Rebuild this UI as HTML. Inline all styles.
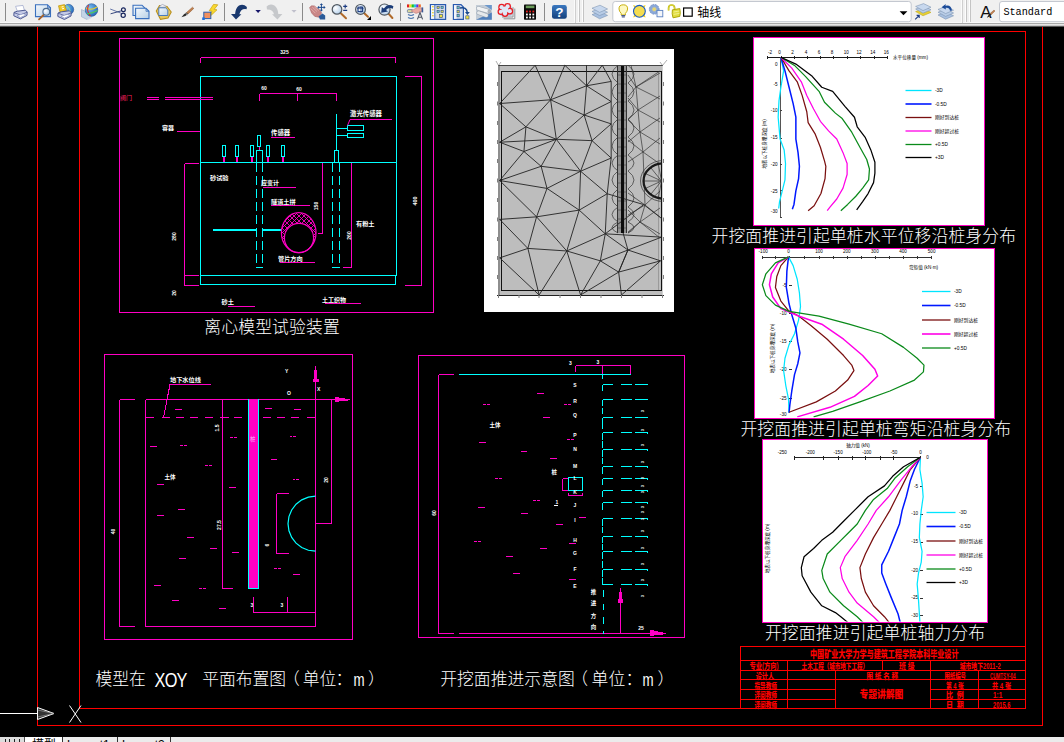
<!DOCTYPE html>
<html lang="zh-CN">
<head>
<meta charset="utf-8">
<title>专题讲解图</title>
<style>
html,body{margin:0;padding:0;background:#000;}
body{width:1064px;height:742px;overflow:hidden;position:relative;font-family:"Liberation Sans","Noto Sans CJK SC",sans-serif;}
#tb{position:absolute;left:0;top:0;width:1064px;height:27px;background:linear-gradient(#f0f0f0 0,#f0f0f0 22px,#f9f9f9 22px,#f9f9f9 23px,#a9a9a9 23px,#a9a9a9 24px,#e9e9e9 24px,#e4e4e4 25px,#c8c8c8 25px,#c8c8c8 26px,#585858 26px,#585858 27px);}
#tbi{position:absolute;left:0;top:0;}
#cv{position:absolute;left:0;top:0;}
#cv text{font-family:"Liberation Sans","Noto Sans CJK SC",sans-serif;}
.cap{position:absolute;color:#fff;font-size:16.8px;line-height:17px;white-space:nowrap;font-weight:300;font-family:"Liberation Sans","Noto Sans CJK SC",sans-serif;}
.ltn{font-size:20.4px;line-height:21px;width:0;display:flex;justify-content:center;transform:scaleX(.8);}
.ltm{font-size:17.5px;line-height:19px;width:0;display:flex;justify-content:center;transform:scaleX(.76);}
.lat{font-family:"Liberation Mono",monospace;font-size:17px;letter-spacing:1.4px;font-weight:400;}
#sb{position:absolute;left:0;top:737px;width:1064px;height:5px;background:#ebebeb;overflow:hidden;}
#sb i{position:absolute;top:0;height:5px;display:block}
#sb span{position:absolute;top:2px;font-size:12px;line-height:12px;color:#000;font-family:"Liberation Sans","Noto Sans CJK SC",sans-serif;}
.lay{position:absolute;left:697.3px;top:5px;font-size:12px;line-height:16px;color:#000;font-family:"Liberation Sans","Noto Sans CJK SC",sans-serif;}
.std{position:absolute;left:1003.4px;top:5px;font-size:10.2px;line-height:16px;color:#000;font-family:"Liberation Mono",monospace;letter-spacing:0px;}
</style>
</head>
<body>
<svg id="cv" width="1064" height="742" viewBox="0 0 1064 742">
<rect x="0" y="0" width="1064" height="742" fill="#000"/>
<g shape-rendering="crispEdges">
<line x1="37.5" y1="26" x2="37.5" y2="725.5" stroke="#ff0000" stroke-width="1" />
<line x1="37.5" y1="725.5" x2="1043" y2="725.5" stroke="#ff0000" stroke-width="1" />
<line x1="1042.5" y1="26" x2="1042.5" y2="725.5" stroke="#ff0000" stroke-width="1" />
<rect x="79.5" y="31.5" width="946" height="677" stroke="#ff0000" fill="none" stroke-width="1" />
<line x1="0" y1="713.5" x2="38" y2="713.5" stroke="#ffffff" stroke-width="1" />
</g>
<path d="M37.5 707.5 L54 713.5 L37.5 719.5 Z" fill="#333" stroke="#fff" stroke-width="1"/>
<path d="M37.5 710 L54 713.5 M37.5 717 L54 713.5" stroke="#aaa" stroke-width="0.6"/>
<path d="M69.5 705.5 L81 722.5 M81 705.5 L69.5 722.5" stroke="#fff" stroke-width="1"/>
<g shape-rendering="crispEdges">
<rect x="119.5" y="38.5" width="314" height="274" stroke="#ff00c4" fill="none" stroke-width="1" />
<line x1="200.5" y1="57.5" x2="395.5" y2="57.5" stroke="#ff00c4" stroke-width="1" />
<line x1="200.5" y1="57.5" x2="200.5" y2="63" stroke="#ff00c4" stroke-width="1" />
<line x1="395.5" y1="57.5" x2="395.5" y2="63" stroke="#ff00c4" stroke-width="1" />
<rect x="200.5" y="76.5" width="196" height="199" stroke="#00ffff" fill="none" stroke-width="1" />
<path d="M200.5 275.5 L200.5 284.5 L395.5 284.5 L395.5 275.5" stroke="#00ffff" fill="none" stroke-width="1" />
<line x1="200.5" y1="162.5" x2="396.5" y2="162.5" stroke="#00ffff" stroke-width="1" />
<line x1="405" y1="76.5" x2="421.5" y2="76.5" stroke="#ff00c4" stroke-width="1" />
<line x1="421.5" y1="76.5" x2="421.5" y2="285.5" stroke="#ff00c4" stroke-width="1" />
<line x1="405" y1="285.5" x2="421.5" y2="285.5" stroke="#ff00c4" stroke-width="1" />
<line x1="184.5" y1="163.5" x2="184.5" y2="285.5" stroke="#ff00c4" stroke-width="1" />
<line x1="184.5" y1="163.5" x2="198.5" y2="163.5" stroke="#ff00c4" stroke-width="1" />
<line x1="184.5" y1="275.5" x2="198.5" y2="275.5" stroke="#ff00c4" stroke-width="1" />
<line x1="184.5" y1="285.5" x2="198.5" y2="285.5" stroke="#ff00c4" stroke-width="1" />
<line x1="147" y1="97.5" x2="158.5" y2="97.5" stroke="#ff00c4" stroke-width="1" />
<line x1="165" y1="97.5" x2="212.5" y2="97.5" stroke="#ff00c4" stroke-width="1" />
<line x1="147" y1="99.5" x2="158.5" y2="99.5" stroke="#ff00c4" stroke-width="1" />
<line x1="165" y1="99.5" x2="212.5" y2="99.5" stroke="#ff00c4" stroke-width="1" />
<line x1="177" y1="131.5" x2="200" y2="131.5" stroke="#ff00c4" stroke-width="1" />
<line x1="259.5" y1="93.5" x2="336.5" y2="93.5" stroke="#ff00c4" stroke-width="1" />
<line x1="259.5" y1="93.5" x2="259.5" y2="101" stroke="#ff00c4" stroke-width="1" />
<line x1="297.5" y1="93.5" x2="297.5" y2="101" stroke="#ff00c4" stroke-width="1" />
<line x1="336.5" y1="93.5" x2="336.5" y2="101" stroke="#ff00c4" stroke-width="1" />
<line x1="336.5" y1="114" x2="336.5" y2="150.5" stroke="#00ffff" stroke-width="1" />
<line x1="336.5" y1="128.5" x2="347.5" y2="128.5" stroke="#00ffff" stroke-width="1" />
<line x1="336.5" y1="135.5" x2="347.5" y2="135.5" stroke="#00ffff" stroke-width="1" />
<rect x="347.5" y="125.5" width="16" height="5" stroke="#00ffff" fill="none" stroke-width="1" />
<rect x="347.5" y="133.5" width="16" height="4" stroke="#00ffff" fill="none" stroke-width="1" />
<line x1="350" y1="119.5" x2="391.5" y2="119.5" stroke="#ff00c4" stroke-width="1" />
<line x1="271" y1="137.5" x2="295" y2="137.5" stroke="#ff00c4" stroke-width="1" />
<rect x="222.5" y="145.5" width="3" height="11" stroke="#00ffff" fill="none" stroke-width="1" />
<rect x="223" y="157" width="2" height="5" stroke="#ff00c4" fill="#ff00c4" stroke-width="0" />
<rect x="235.5" y="145.5" width="3" height="11" stroke="#00ffff" fill="none" stroke-width="1" />
<rect x="236" y="157" width="2" height="5" stroke="#ff00c4" fill="#ff00c4" stroke-width="0" />
<rect x="250.5" y="145.5" width="3" height="11" stroke="#00ffff" fill="none" stroke-width="1" />
<rect x="251" y="157" width="2" height="5" stroke="#ff00c4" fill="#ff00c4" stroke-width="0" />
<rect x="266.5" y="145.5" width="3" height="11" stroke="#00ffff" fill="none" stroke-width="1" />
<rect x="267" y="157" width="2" height="5" stroke="#ff00c4" fill="#ff00c4" stroke-width="0" />
<rect x="281.5" y="145.5" width="3" height="11" stroke="#00ffff" fill="none" stroke-width="1" />
<rect x="282" y="157" width="2" height="5" stroke="#ff00c4" fill="#ff00c4" stroke-width="0" />
<rect x="257.5" y="135.5" width="3" height="11" stroke="#00ffff" fill="none" stroke-width="1" />
<rect x="258.5" y="147" width="1.5" height="3.5" stroke="#ff00c4" fill="#ff00c4" stroke-width="0" />
<rect x="256.5" y="150.5" width="6" height="12" stroke="#00ffff" fill="none" stroke-width="1" />
<rect x="334.5" y="150.5" width="4" height="12" stroke="#00ffff" fill="none" stroke-width="1" />
<line x1="256.5" y1="163" x2="256.5" y2="267.5" stroke="#00ffff" stroke-width="1" stroke-dasharray="9 4"/>
<line x1="262.5" y1="163" x2="262.5" y2="267.5" stroke="#00ffff" stroke-width="1" stroke-dasharray="9 4"/>
<line x1="332.5" y1="163" x2="332.5" y2="267.5" stroke="#00ffff" stroke-width="1" stroke-dasharray="9 4"/>
<line x1="339.5" y1="163" x2="339.5" y2="267.5" stroke="#00ffff" stroke-width="1" stroke-dasharray="9 4"/>
<line x1="256.5" y1="267.5" x2="262.5" y2="267.5" stroke="#00ffff" stroke-width="1" />
<line x1="332.5" y1="267.5" x2="339.5" y2="267.5" stroke="#00ffff" stroke-width="1" />
<line x1="322.5" y1="162.5" x2="322.5" y2="233.5" stroke="#ff00c4" stroke-width="1" />
<line x1="318" y1="233.5" x2="322.5" y2="233.5" stroke="#ff00c4" stroke-width="1" />
<line x1="351.5" y1="162.5" x2="351.5" y2="267.5" stroke="#ff00c4" stroke-width="1" />
<line x1="343" y1="267.5" x2="351.5" y2="267.5" stroke="#ff00c4" stroke-width="1" />
<rect x="213" y="229" width="43" height="2" stroke="#00ffff" fill="#00ffff" stroke-width="0" />
<rect x="263" y="229" width="18.5" height="2" stroke="#00ffff" fill="#00ffff" stroke-width="0" />
<line x1="263" y1="187.5" x2="295.5" y2="187.5" stroke="#ff00c4" stroke-width="1" />
<line x1="271" y1="205.5" x2="309.5" y2="205.5" stroke="#ff00c4" stroke-width="1" />
<line x1="280" y1="262.5" x2="315" y2="262.5" stroke="#ff00c4" stroke-width="1" />
<line x1="228" y1="306.5" x2="254.5" y2="306.5" stroke="#ff00c4" stroke-width="1" />
<line x1="324.5" y1="303.5" x2="360.5" y2="303.5" stroke="#ff00c4" stroke-width="1" />
</g>
<line x1="350" y1="119.5" x2="347.5" y2="125.5" stroke="#ff00c4" stroke-width="1" />
<defs><clipPath id="tc"><path clip-rule="evenodd" d="M281.4 232.7 a17.3 20 0 1 0 34.6 0 a17.3 20 0 1 0 -34.6 0 Z M284.4 238 a14.6 14.6 0 1 0 29.2 0 a14.6 14.6 0 1 0 -29.2 0 Z"/></clipPath></defs>
<path d="M154 210 l45 45 M214 210 l-45 45 M158.8 210 l45 45 M218.8 210 l-45 45 M163.6 210 l45 45 M223.6 210 l-45 45 M168.4 210 l45 45 M228.4 210 l-45 45 M173.2 210 l45 45 M233.2 210 l-45 45 M178 210 l45 45 M238 210 l-45 45 M182.8 210 l45 45 M242.8 210 l-45 45 M187.6 210 l45 45 M247.6 210 l-45 45 M192.4 210 l45 45 M252.4 210 l-45 45 M197.2 210 l45 45 M257.2 210 l-45 45 M202 210 l45 45 M262 210 l-45 45 M206.8 210 l45 45 M266.8 210 l-45 45 M211.6 210 l45 45 M271.6 210 l-45 45 M216.4 210 l45 45 M276.4 210 l-45 45 M221.2 210 l45 45 M281.2 210 l-45 45 M226 210 l45 45 M286 210 l-45 45 M230.8 210 l45 45 M290.8 210 l-45 45 M235.6 210 l45 45 M295.6 210 l-45 45 M240.4 210 l45 45 M300.4 210 l-45 45 M245.2 210 l45 45 M305.2 210 l-45 45 M250 210 l45 45 M310 210 l-45 45 M254.8 210 l45 45 M314.8 210 l-45 45 M259.6 210 l45 45 M319.6 210 l-45 45 M264.4 210 l45 45 M324.4 210 l-45 45 M269.2 210 l45 45 M329.2 210 l-45 45 M274 210 l45 45 M334 210 l-45 45 M278.8 210 l45 45 M338.8 210 l-45 45 M283.6 210 l45 45 M343.6 210 l-45 45 M288.4 210 l45 45 M348.4 210 l-45 45 M293.2 210 l45 45 M353.2 210 l-45 45 M298 210 l45 45 M358 210 l-45 45 M302.8 210 l45 45 M362.8 210 l-45 45 M307.6 210 l45 45 M367.6 210 l-45 45 M312.4 210 l45 45 M372.4 210 l-45 45 M317.2 210 l45 45 M377.2 210 l-45 45 M322 210 l45 45 M382 210 l-45 45 M326.8 210 l45 45 M386.8 210 l-45 45 M331.6 210 l45 45 M391.6 210 l-45 45 M336.4 210 l45 45 M396.4 210 l-45 45 M341.2 210 l45 45 M401.2 210 l-45 45 M346 210 l45 45 M406 210 l-45 45 M350.8 210 l45 45 M410.8 210 l-45 45 M355.6 210 l45 45 M415.6 210 l-45 45 M360.4 210 l45 45 M420.4 210 l-45 45 M365.2 210 l45 45 M425.2 210 l-45 45 M370 210 l45 45 M430 210 l-45 45 M374.8 210 l45 45 M434.8 210 l-45 45 M379.6 210 l45 45 M439.6 210 l-45 45 M384.4 210 l45 45 M444.4 210 l-45 45 M389.2 210 l45 45 M449.2 210 l-45 45" stroke="#ff00c4" stroke-width="0.9" fill="none" clip-path="url(#tc)" shape-rendering="crispEdges"/>
<ellipse cx="298.7" cy="232.7" rx="17.3" ry="20" stroke="#ff00c4" fill="none" stroke-width="1.2"/>
<circle cx="299" cy="238" r="14.6" stroke="#ff00c4" fill="none" stroke-width="1.2"/>
<text x="284.5" y="53.6" font-size="5" fill="#ffffff" text-anchor="middle" font-weight="700" >325</text>
<text x="264" y="89.7" font-size="5" fill="#ffffff" text-anchor="middle" font-weight="700" >60</text>
<text x="299" y="90.7" font-size="5" fill="#ffffff" text-anchor="middle" font-weight="700" >60</text>
<text x="120" y="100" font-size="6" fill="#ff2060" text-anchor="start" >阀门</text>
<text x="162" y="129.8" font-size="6" fill="#ffffff" text-anchor="start" font-weight="700" >容器</text>
<text x="350" y="116" font-size="6.4" fill="#ffffff" text-anchor="start" font-weight="700" >激光传感器</text>
<text x="271" y="135" font-size="6.4" fill="#ffffff" text-anchor="start" font-weight="700" >传感器</text>
<text x="210" y="179.5" font-size="6.2" fill="#ffffff" text-anchor="start" font-weight="700" >砂试验</text>
<text x="261" y="185" font-size="6" fill="#ffffff" text-anchor="start" font-weight="700" >应变计</text>
<text x="271" y="203.5" font-size="6.2" fill="#ffffff" text-anchor="start" font-weight="700" >隧道土拼</text>
<text x="318" y="206" font-size="5" fill="#ffffff" text-anchor="middle" transform="rotate(-90 318 206)" font-weight="700" >150</text>
<text x="416.5" y="201" font-size="5.5" fill="#ffffff" text-anchor="middle" transform="rotate(-90 416.5 201)" font-weight="700" >400</text>
<text x="176" y="236.5" font-size="5" fill="#ffffff" text-anchor="middle" transform="rotate(-90 176 236.5)" font-weight="700" >280</text>
<text x="176" y="293" font-size="5" fill="#ffffff" text-anchor="middle" transform="rotate(-90 176 293)" font-weight="700" >20</text>
<text x="351" y="235.5" font-size="5" fill="#ffffff" text-anchor="middle" transform="rotate(-90 351 235.5)" font-weight="700" >260</text>
<text x="356" y="226" font-size="6.2" fill="#ffffff" text-anchor="start" font-weight="700" >有粉土</text>
<text x="278" y="261" font-size="6.2" fill="#ffffff" text-anchor="start" font-weight="700" >管片方向</text>
<text x="221.5" y="303.5" font-size="6.2" fill="#ffffff" text-anchor="start" font-weight="700" >砂土</text>
<text x="322" y="301.5" font-size="6" fill="#ffffff" text-anchor="start" font-weight="700" >土工织物</text>
<rect x="484" y="49" width="190" height="263" fill="#fff"/>
<rect x="498" y="65" width="164.7" height="230.5" fill="#bdbdbd"/>
<rect x="618" y="65" width="9" height="168" fill="#909090"/>
<g shape-rendering="crispEdges">
<rect x="498" y="65" width="2" height="230" stroke="#8e8e8e" fill="#8e8e8e" stroke-width="0" />
<line x1="498" y1="65.5" x2="663" y2="65.5" stroke="#444" stroke-width="1" />
<line x1="658.5" y1="71.5" x2="658.5" y2="290.5" stroke="#9a9a9a" stroke-width="1" />
<rect x="496.5" y="294.5" width="167.5" height="1.5" stroke="#222" fill="#222" stroke-width="0" />
<rect x="501.5" y="71.5" width="160" height="219" stroke="#111" fill="none" stroke-width="1.2" />
</g>
<path d="M499.67 103.55 L535.19 65.26 M535.19 65.26 L550.59 99.8 M564.8 65.26 L550.59 99.8 M564.8 65.26 L586.51 85.79 M586.51 65.26 L586.51 85.79 M602.29 65.26 L586.51 85.79 M602.29 65.26 L611.18 81.44 M586.51 85.79 L611.18 81.44 M550.59 99.8 L586.51 85.79 M550.59 99.8 L499.67 103.55 M550.59 99.8 L525.92 126.84 M550.59 99.8 L584.14 115 M550.59 99.8 L556.31 139.27 M586.51 85.79 L584.14 115 M586.51 85.79 L611.18 101.57 M584.14 115 L611.18 101.57 M584.14 115 L611.18 123.88 M584.14 115 L556.31 139.27 M584.14 115 L592.03 140.65 M525.92 126.84 L499.67 103.55 M525.92 126.84 L499.67 142.23 M525.92 126.84 L556.31 139.27 M525.92 126.84 L523.94 151.51 M556.31 139.27 L499.67 142.23 M556.31 139.27 L592.03 140.65 M556.31 139.27 L523.94 151.51 M556.31 139.27 L580.59 171.24 M556.31 139.27 L541.11 166.31 M592.03 140.65 L611.18 123.88 M592.03 140.65 L611.18 158.02 M592.03 140.65 L580.59 171.24 M523.94 151.51 L499.67 142.23 M523.94 151.51 L499.67 180.52 M523.94 151.51 L541.11 166.31 M541.11 166.31 L580.59 171.24 M541.11 166.31 L499.67 180.52 M580.59 171.24 L611.18 158.02 M611.18 101.57 L611.18 81.44 M611.18 101.57 L611.18 123.88 M611.18 123.88 L611.18 158.02 M499.67 180.52 L547.03 188.42 M547.03 188.42 L580.59 171.24 M547.03 188.42 L541.11 166.31 M547.03 188.42 L579.2 210.13 M547.03 188.42 L536.57 216.84 M499.67 180.52 L536.57 216.84 M499.67 219.4 L536.57 216.84 M536.57 216.84 L579.2 210.13 M536.57 216.84 L527.89 248.42 M536.57 216.84 L566.77 250.98 M579.2 210.13 L566.77 250.98 M579.2 210.13 L607.23 193.75 M579.2 210.13 L605.25 233.81 M579.2 210.13 L580.59 171.24 M607.23 193.75 L580.59 171.24 M607.23 193.75 L605.25 233.81 M607.23 193.75 L611.18 158.02 M605.25 233.81 L566.77 250.98 M605.25 233.81 L600.32 260.85 M605.25 233.81 L627.95 250 M527.89 248.42 L499.67 219.4 M527.89 248.42 L499.67 257.89 M527.89 248.42 L566.77 250.98 M527.89 248.42 L539.14 294.99 M566.77 250.98 L539.14 294.99 M566.77 250.98 L580.59 294.99 M566.77 250.98 L600.32 260.85 M600.32 260.85 L580.59 294.99 M600.32 260.85 L618.67 272.1 M600.32 260.85 L627.95 250 M627.95 250 L618.67 272.1 M627.95 250 L660.51 260.85 M618.67 272.1 L660.51 260.85 M618.67 272.1 L621.44 294.99 M660.51 260.85 L621.44 294.99 M499.67 257.89 L539.14 294.99 M627.95 250 L661.5 237.17 M627.95 250 L623.02 232.63 M618.67 272.1 L627.95 250 M605.25 233.81 L661.5 237.17 M605.25 233.81 L643.74 204.6 M643.74 204.6 L661.5 218.42 M607.23 193.75 L643.74 204.6 M618.67 272.1 L580.59 294.99" stroke="#222" stroke-width="0.9" fill="none"/>
<path d="M618 65.3 Q606 74.15 618 83 M628 65.3 Q640 74.15 628 83 M618 83 Q606 92 618 101 M628 83 Q640 92 628 101 M618 101 Q606 110 618 119 M628 101 Q640 110 628 119 M618 119 Q606 128 618 137 M628 119 Q640 128 628 137 M618 137 Q606 146 618 155 M628 137 Q640 146 628 155 M618 155 Q606 163 618 171 M628 155 Q640 163 628 171 M618 171 Q606 180 618 189 M628 171 Q640 180 628 189 M618 189 Q606 198 618 207 M628 189 Q640 198 628 207 M618 207 Q606 214.5 618 222 M628 207 Q640 214.5 628 222 M618 222 Q606 227.5 618 233 M628 222 Q640 227.5 628 233 M628 75 L636 87 L660 73 M628 97 L636 87 L660 99 M628 98 L638 110 L660 96 M628 120 L638 110 L660 122 M636 87 L638 110 M628 120 L640 132 L660 118 M628 142 L640 132 L660 144 M638 110 L640 132 M628 140 L643 152 L660 138 M628 162 L643 152 L660 164 M640 132 L643 152 M628 193 L645 205 L660 191 M628 215 L645 205 L660 217 M643 152 L645 205 M628 210 L640 222 L660 208 M628 232 L640 222 L660 234 M645 205 L640 222 M631 65.3 L636 87 M660 71 L636 87 M628 233 L640 222 L660 238 M661.5 181 L658.32 198 M661.5 181 L650.64 194.48 M661.5 181 L645.37 188.44 M661.5 181 L643.5 181 M661.5 181 L645.37 173.56 M661.5 181 L650.64 167.52 M661.5 181 L658.32 164" stroke="#333" stroke-width="0.7" fill="none"/>
<path d="M617.5 75 L627 75 M617.5 84 L627 84 M617.5 93 L627 93 M617.5 102 L627 102 M617.5 111 L627 111 M617.5 120 L627 120 M617.5 129 L627 129 M617.5 138 L627 138 M617.5 147 L627 147 M617.5 156 L627 156 M617.5 165 L627 165 M617.5 174 L627 174 M617.5 183 L627 183 M617.5 192 L627 192 M617.5 201 L627 201 M617.5 210 L627 210 M617.5 219 L627 219 M617.5 228 L627 228" stroke="#444" stroke-width="0.6" fill="none"/>
<g shape-rendering="crispEdges">
<line x1="617.5" y1="65.5" x2="617.5" y2="233" stroke="#333" stroke-width="1" />
<line x1="626.5" y1="65.5" x2="626.5" y2="233" stroke="#333" stroke-width="1" />
<rect x="621" y="65.5" width="3.2" height="167" stroke="#0c0c0c" fill="#0c0c0c" stroke-width="0" />
</g>
<defs><clipPath id="mc"><rect x="498" y="65" width="163.5" height="230"/></clipPath></defs>
<g clip-path="url(#mc)"><ellipse cx="663.5" cy="181" rx="20" ry="17.6" stroke="#1a1a1a" stroke-width="2.2" fill="none"/><ellipse cx="663.5" cy="181" rx="23" ry="20.5" stroke="#333" stroke-width="0.7" fill="none"/></g>
<path d="M497.5 82 v4 M663.5 82 v4 M497.5 101.5 v4 M663.5 101.5 v4 M497.5 121 v4 M663.5 121 v4 M497.5 140 v4 M663.5 140 v4 M497.5 159 v4 M663.5 159 v4 M497.5 178.5 v4 M663.5 178.5 v4 M497.5 198 v4 M663.5 198 v4 M497.5 217.5 v4 M663.5 217.5 v4 M497.5 237 v4 M663.5 237 v4 M497.5 256 v4 M663.5 256 v4 M497.5 275 v4 M663.5 275 v4 M498.5 295 v3 M519 295 v3 M539 295 v3 M560 295 v3 M580.5 295 v3 M601 295 v3 M621.5 295 v3 M642 295 v3 M662.5 295 v3" stroke="#808080" stroke-width="1" fill="none"/>
<path d="M496 61 L498.5 65.5 L501 62 M660 62 L662.5 65.5 L667 60" stroke="#777" stroke-width="0.6" fill="none"/>
<rect x="753.5" y="37.5" width="231" height="187.5" fill="#fff" stroke="#ff00c4" stroke-width="1" shape-rendering="crispEdges"/>
<g shape-rendering="crispEdges">
<line x1="767.5" y1="57.5" x2="888" y2="57.5" stroke="#1a1a1a" stroke-width="1" />
<line x1="780.5" y1="57.5" x2="780.5" y2="218" stroke="#555" stroke-width="1" />
<line x1="767.5" y1="56" x2="767.5" y2="59" stroke="#222" stroke-width="1" />
<line x1="781.5" y1="56" x2="781.5" y2="59" stroke="#222" stroke-width="1" />
<line x1="794.5" y1="56" x2="794.5" y2="59" stroke="#222" stroke-width="1" />
<line x1="807.5" y1="56" x2="807.5" y2="59" stroke="#222" stroke-width="1" />
<line x1="820.5" y1="56" x2="820.5" y2="59" stroke="#222" stroke-width="1" />
<line x1="833.5" y1="56" x2="833.5" y2="59" stroke="#222" stroke-width="1" />
<line x1="847.5" y1="56" x2="847.5" y2="59" stroke="#222" stroke-width="1" />
<line x1="860.5" y1="56" x2="860.5" y2="59" stroke="#222" stroke-width="1" />
<line x1="874.5" y1="56" x2="874.5" y2="59" stroke="#222" stroke-width="1" />
<line x1="887.5" y1="56" x2="887.5" y2="59" stroke="#222" stroke-width="1" />
<line x1="779.5" y1="58.5" x2="782" y2="58.5" stroke="#444" stroke-width="1" />
<line x1="779.5" y1="84.5" x2="782" y2="84.5" stroke="#444" stroke-width="1" />
<line x1="779.5" y1="110.5" x2="782" y2="110.5" stroke="#444" stroke-width="1" />
<line x1="779.5" y1="138.5" x2="782" y2="138.5" stroke="#444" stroke-width="1" />
<line x1="779.5" y1="164.5" x2="782" y2="164.5" stroke="#444" stroke-width="1" />
<line x1="779.5" y1="190.5" x2="782" y2="190.5" stroke="#444" stroke-width="1" />
<line x1="779.5" y1="217.5" x2="782" y2="217.5" stroke="#444" stroke-width="1" />
</g>
<text x="769.98" y="53.5" font-size="4.6" fill="#000" text-anchor="middle" >-2</text>
<text x="779.52" y="53.5" font-size="4.6" fill="#000" text-anchor="middle" >0</text>
<text x="792.6" y="53.5" font-size="4.6" fill="#000" text-anchor="middle" >2</text>
<text x="805.96" y="53.5" font-size="4.6" fill="#000" text-anchor="middle" >4</text>
<text x="819.04" y="53.5" font-size="4.6" fill="#000" text-anchor="middle" >6</text>
<text x="832.12" y="53.5" font-size="4.6" fill="#000" text-anchor="middle" >8</text>
<text x="846.3" y="53.5" font-size="4.6" fill="#000" text-anchor="middle" >10</text>
<text x="859.11" y="53.5" font-size="4.6" fill="#000" text-anchor="middle" >12</text>
<text x="872.73" y="53.5" font-size="4.6" fill="#000" text-anchor="middle" >14</text>
<text x="886.36" y="53.5" font-size="4.6" fill="#000" text-anchor="middle" >16</text>
<text x="893" y="58.8" font-size="4.6" fill="#000" text-anchor="start" >水平位移量 (mm)</text>
<text x="777.5" y="66.31" font-size="4.6" fill="#000" text-anchor="end" >0</text>
<text x="777.5" y="85.67" font-size="4.6" fill="#000" text-anchor="end" >-5</text>
<text x="777.5" y="112.1" font-size="4.6" fill="#000" text-anchor="end" >-10</text>
<text x="777.5" y="139.36" font-size="4.6" fill="#000" text-anchor="end" >-15</text>
<text x="777.5" y="165.8" font-size="4.6" fill="#000" text-anchor="end" >-20</text>
<text x="777.5" y="192.51" font-size="4.6" fill="#000" text-anchor="end" >-25</text>
<text x="777.5" y="212.95" font-size="4.6" fill="#000" text-anchor="end" >-30</text>
<text x="766" y="144" font-size="4.6" fill="#000" text-anchor="middle" transform="rotate(-90 766 144)" >地表以下桩身埋深度 (m)</text>
<path d="M780.88 57.26 L783.61 70.88 L780.88 87.24 L778.98 100.86 L778.16 117.22 L780.07 139.02 L784.15 149.92 L785.52 163.55 L784.97 179.9 L782.25 190.81 L779.52 201.71 L778.7 208.52" stroke="#00e5ff" fill="none" stroke-width="1.25" stroke-linejoin="round"/>
<path d="M780.88 57.26 L784.97 70.88 L789.06 87.24 L793.15 103.59 L795.87 117.22 L795.87 139.02 L798.05 152.65 L799.42 166.28 L798.6 178.54 L795.87 190.81 L793.97 204.43 L792.33 209.34" stroke="#0018ff" fill="none" stroke-width="1.5" stroke-linejoin="round"/>
<path d="M780.88 57.26 L789.06 70.88 L797.24 81.79 L802.14 95.41 L806.78 111.77 L808.14 122.67 L814.95 133.57 L820.4 147.2 L824.49 160.83 L825.85 166.28 L825.04 178.54 L820.95 193.53 L814.13 205.8 L808.14 210.7" stroke="#7a1010" fill="none" stroke-width="1.25" stroke-linejoin="round"/>
<path d="M780.88 57.26 L791.79 68.16 L801.32 81.79 L806.78 95.41 L813.59 109.04 L820.4 121.31 L828.58 130.84 L836.76 139.02 L843.03 152.65 L847.11 163.55 L847.11 174.45 L843.03 188.08 L836.76 198.98 L829.94 207.16 L827.22 210.7" stroke="#ff00e6" fill="none" stroke-width="1.25" stroke-linejoin="round"/>
<path d="M780.88 57.26 L794.51 65.43 L805.41 76.33 L819.04 91.32 L824.49 102.23 L835.39 113.13 L842.21 118.58 L851.75 132.21 L859.92 147.2 L866.74 159.46 L869.46 169 L868.65 179.9 L862.65 188.08 L855.84 196.26 L847.66 204.43 L840.84 210.7" stroke="#0a8a1a" fill="none" stroke-width="1.25" stroke-linejoin="round"/>
<path d="M780.88 57.26 L795.87 64.07 L812.23 76.33 L821.77 87.24 L832.67 91.32 L844.93 106.32 L854.47 117.22 L857.2 126.76 L865.37 137.66 L870.83 149.92 L874.91 162.19 L874.91 173.09 L873.55 182.63 L868.1 193.53 L862.65 201.71 L856.65 209.89" stroke="#000000" fill="none" stroke-width="1.25" stroke-linejoin="round"/>
<line x1="905.5" y1="90.5" x2="931.5" y2="90.5" stroke="#00e5ff" stroke-width="1.3" />
<text x="935" y="92.3" font-size="4.8" fill="#000" text-anchor="start" >-3D</text>
<line x1="905.5" y1="104" x2="931.5" y2="104" stroke="#0018ff" stroke-width="1.6" />
<text x="935" y="105.8" font-size="4.8" fill="#000" text-anchor="start" >-0.5D</text>
<line x1="905.5" y1="117.5" x2="931.5" y2="117.5" stroke="#7a1010" stroke-width="1.3" />
<text x="935" y="119.3" font-size="4.8" fill="#000" text-anchor="start" >刚好到达桩</text>
<line x1="905.5" y1="131" x2="931.5" y2="131" stroke="#ff00e6" stroke-width="1.3" />
<text x="935" y="132.8" font-size="4.8" fill="#000" text-anchor="start" >刚好超过桩</text>
<line x1="905.5" y1="144.5" x2="931.5" y2="144.5" stroke="#0a8a1a" stroke-width="1.3" />
<text x="935" y="146.3" font-size="4.8" fill="#000" text-anchor="start" >+0.5D</text>
<line x1="905.5" y1="157.5" x2="931.5" y2="157.5" stroke="#000000" stroke-width="1.3" />
<text x="935" y="159.3" font-size="4.8" fill="#000" text-anchor="start" >+3D</text>
<rect x="754.5" y="248" width="240" height="170" fill="#fff" stroke="#ff00c4" stroke-width="1" shape-rendering="crispEdges"/>
<g shape-rendering="crispEdges">
<line x1="762" y1="257" x2="931" y2="257" stroke="#333" stroke-width="1" />
<line x1="762.5" y1="255.5" x2="762.5" y2="258.5" stroke="#333" stroke-width="1" />
<line x1="775.5" y1="255.5" x2="775.5" y2="258.5" stroke="#333" stroke-width="1" />
<line x1="789.5" y1="255.5" x2="789.5" y2="258.5" stroke="#333" stroke-width="1" />
<line x1="804.5" y1="255.5" x2="804.5" y2="258.5" stroke="#333" stroke-width="1" />
<line x1="819.5" y1="255.5" x2="819.5" y2="258.5" stroke="#333" stroke-width="1" />
<line x1="833.5" y1="255.5" x2="833.5" y2="258.5" stroke="#333" stroke-width="1" />
<line x1="847.5" y1="255.5" x2="847.5" y2="258.5" stroke="#333" stroke-width="1" />
<line x1="861.5" y1="255.5" x2="861.5" y2="258.5" stroke="#333" stroke-width="1" />
<line x1="875.5" y1="255.5" x2="875.5" y2="258.5" stroke="#333" stroke-width="1" />
<line x1="889.5" y1="255.5" x2="889.5" y2="258.5" stroke="#333" stroke-width="1" />
<line x1="903.5" y1="255.5" x2="903.5" y2="258.5" stroke="#333" stroke-width="1" />
<line x1="917.5" y1="255.5" x2="917.5" y2="258.5" stroke="#333" stroke-width="1" />
<line x1="931.5" y1="255.5" x2="931.5" y2="258.5" stroke="#333" stroke-width="1" />
<line x1="789" y1="285.5" x2="791.5" y2="285.5" stroke="#333" stroke-width="1" />
<line x1="789" y1="313.5" x2="791.5" y2="313.5" stroke="#333" stroke-width="1" />
<line x1="789" y1="341.5" x2="791.5" y2="341.5" stroke="#333" stroke-width="1" />
<line x1="789" y1="369.5" x2="791.5" y2="369.5" stroke="#333" stroke-width="1" />
<line x1="789" y1="398.5" x2="791.5" y2="398.5" stroke="#333" stroke-width="1" />
</g>
<text x="763.17" y="253" font-size="4.6" fill="#000" text-anchor="middle" >-100</text>
<text x="788.51" y="253" font-size="4.6" fill="#000" text-anchor="middle" >0</text>
<text x="819.04" y="253" font-size="4.6" fill="#000" text-anchor="middle" >100</text>
<text x="846.84" y="253" font-size="4.6" fill="#000" text-anchor="middle" >200</text>
<text x="874.91" y="253" font-size="4.6" fill="#000" text-anchor="middle" >300</text>
<text x="902.99" y="253" font-size="4.6" fill="#000" text-anchor="middle" >400</text>
<text x="931.61" y="253" font-size="4.6" fill="#000" text-anchor="middle" >500</text>
<text x="909" y="268.8" font-size="4.6" fill="#000" text-anchor="start" >弯矩值 (kN·m)</text>
<text x="786.5" y="286.93" font-size="4.6" fill="#000" text-anchor="end" >-5</text>
<text x="786.5" y="315.01" font-size="4.6" fill="#000" text-anchor="end" >-10</text>
<text x="786.5" y="343.08" font-size="4.6" fill="#000" text-anchor="end" >-15</text>
<text x="786.5" y="370.88" font-size="4.6" fill="#000" text-anchor="end" >-20</text>
<text x="786.5" y="399.5" font-size="4.6" fill="#000" text-anchor="end" >-25</text>
<text x="786.5" y="415.85" font-size="4.6" fill="#000" text-anchor="end" >-30</text>
<text x="773.5" y="348.5" font-size="4.6" fill="#000" text-anchor="middle" transform="rotate(-90 773.5 348.5)" >地表以下桩身埋深度 (m)</text>
<defs><clipPath id="k2"><rect x="755" y="248.5" width="239" height="169"/></clipPath></defs><g clip-path="url(#k2)">
<path d="M788.51 256.89 L793.15 265.61 L797.24 279.24 L799.42 292.86 L800.51 306.49 L798.6 320.12 L794.51 333.75 L789.06 344.65 L784.97 358.28 L783.61 370.54 L785.79 385.53 L788.51 399.16 L789.06 412.79" stroke="#00e5ff" fill="none" stroke-width="1.25" stroke-linejoin="round"/>
<path d="M788.51 256.89 L786.88 271.06 L786.33 287.41 L789.06 303.77 L791.79 314.67 L795.87 328.3 L797.78 341.92 L799.96 352.83 L797.78 363.73 L794.51 374.63 L791.79 390.98 L789.88 404.61 L789.06 412.79" stroke="#0018ff" fill="none" stroke-width="1.5" stroke-linejoin="round"/>
<path d="M788.51 256.89 L780.88 265.61 L776.79 276.51 L775.43 287.41 L780.88 301.04 L788.51 310.58 L798.6 316.03 L810.86 325.57 L827.22 339.2 L843.57 355.55 L851.75 365.09 L853.93 370.54 L847.66 380.08 L835.39 390.98 L816.32 401.89 L789.06 412.24" stroke="#7a1010" fill="none" stroke-width="1.25" stroke-linejoin="round"/>
<path d="M788.51 256.89 L778.16 262.88 L771.34 273.79 L769.44 284.69 L772.71 296.95 L780.88 308.67 L798.6 316.03 L821.77 324.21 L843.57 339.2 L862.65 355.55 L874.91 369.18 L877.64 375.99 L868.1 385.53 L854.47 396.43 L829.94 407.34 L797.24 416.88" stroke="#ff00e6" fill="none" stroke-width="1.5" stroke-linejoin="round"/>
<path d="M788.51 256.89 L775.43 262.88 L765.89 273.79 L762.35 284.69 L765.89 295.59 L775.43 305.13 L789.06 311.4 L819.04 316.03 L849.02 324.21 L881.73 333.75 L903.53 347.37 L917.16 358.28 L923.97 365.09 L923.43 371.9 L914.43 380.08 L889.9 390.98 L859.92 401.89 L832.67 411.42 L813.59 416.88" stroke="#0a8a1a" fill="none" stroke-width="1.25" stroke-linejoin="round"/>
</g>
<line x1="922" y1="291.5" x2="950.5" y2="291.5" stroke="#00e5ff" stroke-width="1.3" />
<text x="954" y="293.3" font-size="4.8" fill="#000" text-anchor="start" >-3D</text>
<line x1="922" y1="305.5" x2="950.5" y2="305.5" stroke="#0018ff" stroke-width="1.6" />
<text x="954" y="307.3" font-size="4.8" fill="#000" text-anchor="start" >-0.5D</text>
<line x1="922" y1="320" x2="950.5" y2="320" stroke="#7a1010" stroke-width="1.3" />
<text x="954" y="321.8" font-size="4.8" fill="#000" text-anchor="start" >刚好到达桩</text>
<line x1="922" y1="334" x2="950.5" y2="334" stroke="#ff00e6" stroke-width="1.6" />
<text x="954" y="335.8" font-size="4.8" fill="#000" text-anchor="start" >刚好超过桩</text>
<line x1="922" y1="348" x2="950.5" y2="348" stroke="#0a8a1a" stroke-width="1.3" />
<text x="954" y="349.8" font-size="4.8" fill="#000" text-anchor="start" >+0.5D</text>
<rect x="762.5" y="439.5" width="225" height="182.5" fill="#fff" stroke="#ff00c4" stroke-width="1" shape-rendering="crispEdges"/>
<g shape-rendering="crispEdges">
<line x1="794" y1="457.5" x2="921" y2="457.5" stroke="#222" stroke-width="1" />
<line x1="794.5" y1="456" x2="794.5" y2="460" stroke="#222" stroke-width="1" />
<line x1="823.5" y1="456" x2="823.5" y2="460" stroke="#222" stroke-width="1" />
<line x1="838.5" y1="456" x2="838.5" y2="460" stroke="#222" stroke-width="1" />
<line x1="852.5" y1="456" x2="852.5" y2="460" stroke="#222" stroke-width="1" />
<line x1="865.5" y1="456" x2="865.5" y2="460" stroke="#222" stroke-width="1" />
<line x1="880.5" y1="456" x2="880.5" y2="460" stroke="#222" stroke-width="1" />
<line x1="893.5" y1="456" x2="893.5" y2="460" stroke="#222" stroke-width="1" />
<line x1="920.5" y1="456" x2="920.5" y2="460" stroke="#222" stroke-width="1" />
<line x1="919.5" y1="486.5" x2="922.5" y2="486.5" stroke="#333" stroke-width="1" />
<line x1="919.5" y1="514.5" x2="922.5" y2="514.5" stroke="#333" stroke-width="1" />
<line x1="919.5" y1="542.5" x2="922.5" y2="542.5" stroke="#333" stroke-width="1" />
<line x1="919.5" y1="570.5" x2="922.5" y2="570.5" stroke="#333" stroke-width="1" />
<line x1="919.5" y1="598.5" x2="922.5" y2="598.5" stroke="#333" stroke-width="1" />
<line x1="919.5" y1="615.5" x2="922.5" y2="615.5" stroke="#333" stroke-width="1" />
</g>
<text x="782.25" y="453.5" font-size="4.6" fill="#000" text-anchor="middle" >-250</text>
<text x="810.32" y="453.5" font-size="4.6" fill="#000" text-anchor="middle" >-200</text>
<text x="838.12" y="453.5" font-size="4.6" fill="#000" text-anchor="middle" >-150</text>
<text x="866.74" y="453.5" font-size="4.6" fill="#000" text-anchor="middle" >-100</text>
<text x="893.99" y="453.5" font-size="4.6" fill="#000" text-anchor="middle" >-50</text>
<text x="920.43" y="453.5" font-size="4.6" fill="#000" text-anchor="middle" >0</text>
<text x="858" y="447.2" font-size="4.6" fill="#000" text-anchor="middle" >轴力值 (kN)</text>
<text x="927.5" y="459" font-size="4.6" fill="#000" text-anchor="middle" >0</text>
<text x="918" y="487.56" font-size="4.6" fill="#000" text-anchor="end" >-5</text>
<text x="918" y="515.36" font-size="4.6" fill="#000" text-anchor="end" >-10</text>
<text x="918" y="543.44" font-size="4.6" fill="#000" text-anchor="end" >-15</text>
<text x="918" y="571.51" font-size="4.6" fill="#000" text-anchor="end" >-20</text>
<text x="918" y="599.31" font-size="4.6" fill="#000" text-anchor="end" >-25</text>
<text x="918" y="617.03" font-size="4.6" fill="#000" text-anchor="end" >-30</text>
<text x="768.5" y="548.5" font-size="4.6" fill="#000" text-anchor="middle" transform="rotate(-90 768.5 548.5)" >地表以下桩身埋深度 (m)</text>
<defs><clipPath id="k3"><rect x="763" y="440" width="224" height="181.5"/></clipPath></defs><g clip-path="url(#k3)">
<path d="M920.43 457.25 L919.89 469.51 L922.07 483.14 L923.16 496.77 L921.25 510.39 L919.89 524.02 L919.34 537.65 L922.07 551.28 L921.25 562.18 L918.52 573.08 L917.16 583.98 L918.52 600.34 L919.89 622.14" stroke="#00e5ff" fill="none" stroke-width="1.25" stroke-linejoin="round"/>
<path d="M920.43 457.25 L914.43 469.51 L910.35 480.41 L906.26 496.77 L902.17 510.39 L899.44 524.02 L893.99 537.65 L888.54 551.28 L881.73 564.9 L881.73 573.08 L885.82 583.98 L891.27 597.61 L898.08 613.96 L900.81 624.87" stroke="#0018ff" fill="none" stroke-width="1.5" stroke-linejoin="round"/>
<path d="M920.43 457.25 L910.35 469.51 L903.53 483.14 L896.72 496.77 L889.9 510.39 L881.73 524.02 L873.55 537.65 L865.37 554 L859.92 567.63 L861.29 578.53 L865.37 592.16 L873.55 605.79 L884.45 616.69 L889.9 623.5" stroke="#7a1010" fill="none" stroke-width="1.25" stroke-linejoin="round"/>
<path d="M920.43 457.25 L911.71 466.79 L900.81 480.41 L888.54 496.77 L876.28 510.39 L868.1 524.02 L857.2 540.37 L844.93 556.73 L840.3 567.63 L842.21 578.53 L849.02 592.16 L857.2 603.06 L873.55 616.69 L881.73 624.87" stroke="#ff00e6" fill="none" stroke-width="1.25" stroke-linejoin="round"/>
<path d="M920.43 457.25 L907.62 466.79 L895.36 477.69 L887.18 488.59 L873.55 499.49 L865.37 510.39 L857.2 524.02 L849.02 532.2 L840.84 540.37 L827.22 554 L821.77 570.36 L823.13 578.53 L829.94 592.16 L843.57 605.79 L857.2 616.69 L865.37 624.87" stroke="#0a8a1a" fill="none" stroke-width="1.25" stroke-linejoin="round"/>
<path d="M920.43 457.25 L903.53 466.79 L892.63 476.32 L884.45 485.86 L868.1 496.77 L854.47 510.39 L843.57 521.3 L832.67 532.2 L821.77 540.37 L813.59 548.55 L804.05 556.73 L801.32 567.63 L802.14 575.81 L810.86 592.16 L821.77 605.79 L835.39 612.6 L840.84 616.69 L849.02 623.5" stroke="#000000" fill="none" stroke-width="1.25" stroke-linejoin="round"/>
</g>
<line x1="926.5" y1="512.5" x2="955.5" y2="512.5" stroke="#00e5ff" stroke-width="1.3" />
<text x="959" y="514.3" font-size="4.8" fill="#000" text-anchor="start" >-3D</text>
<line x1="926.5" y1="526.5" x2="955.5" y2="526.5" stroke="#0018ff" stroke-width="1.6" />
<text x="959" y="528.3" font-size="4.8" fill="#000" text-anchor="start" >-0.5D</text>
<line x1="926.5" y1="541" x2="955.5" y2="541" stroke="#7a1010" stroke-width="1.3" />
<text x="959" y="542.8" font-size="4.8" fill="#000" text-anchor="start" >刚好到达桩</text>
<line x1="926.5" y1="555" x2="955.5" y2="555" stroke="#ff00e6" stroke-width="1.3" />
<text x="959" y="556.8" font-size="4.8" fill="#000" text-anchor="start" >刚好超过桩</text>
<line x1="926.5" y1="569" x2="955.5" y2="569" stroke="#0a8a1a" stroke-width="1.3" />
<text x="959" y="570.8" font-size="4.8" fill="#000" text-anchor="start" >+0.5D</text>
<line x1="926.5" y1="582.5" x2="955.5" y2="582.5" stroke="#000000" stroke-width="1.3" />
<text x="959" y="584.3" font-size="4.8" fill="#000" text-anchor="start" >+3D</text>
<g shape-rendering="crispEdges">
<rect x="740.5" y="646.5" width="285" height="62" stroke="#ff0000" fill="none" stroke-width="1" />
<line x1="740.5" y1="660.5" x2="1025.5" y2="660.5" stroke="#ff0000" stroke-width="1" />
<line x1="740.5" y1="670.5" x2="1025.5" y2="670.5" stroke="#ff0000" stroke-width="1" />
<line x1="740.5" y1="679.5" x2="1025.5" y2="679.5" stroke="#ff0000" stroke-width="1" />
<line x1="740.5" y1="689.5" x2="835.5" y2="689.5" stroke="#ff0000" stroke-width="1" />
<line x1="930.5" y1="689.5" x2="1025.5" y2="689.5" stroke="#ff0000" stroke-width="1" />
<line x1="740.5" y1="699.5" x2="835.5" y2="699.5" stroke="#ff0000" stroke-width="1" />
<line x1="930.5" y1="699.5" x2="1025.5" y2="699.5" stroke="#ff0000" stroke-width="1" />
<line x1="787.5" y1="660.5" x2="787.5" y2="708.5" stroke="#ff0000" stroke-width="1" />
<line x1="882.5" y1="660.5" x2="882.5" y2="670.5" stroke="#ff0000" stroke-width="1" />
<line x1="930.5" y1="660.5" x2="930.5" y2="708.5" stroke="#ff0000" stroke-width="1" />
<line x1="835.5" y1="670.5" x2="835.5" y2="708.5" stroke="#ff0000" stroke-width="1" />
<line x1="978.5" y1="670.5" x2="978.5" y2="708.5" stroke="#ff0000" stroke-width="1" />
</g>
<text x="810" y="658.3" font-size="10.4" fill="#ff0000" font-weight="900" textLength="148.5" lengthAdjust="spacingAndGlyphs">中国矿业大学力学与建筑工程学院本科毕业设计</text>
<text x="749.5" y="669.3" font-size="8.2" fill="#ff0000" font-weight="900" textLength="29.1" lengthAdjust="spacingAndGlyphs">专业(方向)</text>
<text x="801.6" y="669.3" font-size="8.2" fill="#ff0000" font-weight="900" textLength="66.4" lengthAdjust="spacingAndGlyphs">土木工程（城市地下工程）</text>
<text x="898.9" y="669.3" font-size="8.2" fill="#ff0000" font-weight="900" textLength="15.7" lengthAdjust="spacingAndGlyphs">班 级</text>
<text x="959.8" y="669.3" font-size="8.2" fill="#ff0000" font-weight="900" textLength="40.8" lengthAdjust="spacingAndGlyphs">城市地下2011-2</text>
<text x="755.7" y="679.2" font-size="8.2" fill="#ff0000" font-weight="900" textLength="18.3" lengthAdjust="spacingAndGlyphs">设计人</text>
<text x="754.5" y="688.7" font-size="8.2" fill="#ff0000" font-weight="900" textLength="22.5" lengthAdjust="spacingAndGlyphs">指导教师</text>
<text x="754.5" y="698.2" font-size="8.2" fill="#ff0000" font-weight="900" textLength="22.5" lengthAdjust="spacingAndGlyphs">评阅教师</text>
<text x="754.5" y="707.5" font-size="8.2" fill="#ff0000" font-weight="900" textLength="22.5" lengthAdjust="spacingAndGlyphs">评阅教师</text>
<text x="866.5" y="679.2" font-size="8.2" fill="#ff0000" font-weight="900" textLength="31.5" lengthAdjust="spacingAndGlyphs">图 纸 名 称</text>
<text x="859.6" y="698.3" font-size="10.6" fill="#ff0000" font-weight="900" textLength="43.7" lengthAdjust="spacingAndGlyphs">专题讲解图</text>
<text x="944.4" y="679.2" font-size="8.2" fill="#ff0000" font-weight="900" textLength="21.6" lengthAdjust="spacingAndGlyphs">图纸编号</text>
<text x="946" y="688.7" font-size="8.2" fill="#ff0000" font-weight="900" textLength="17.8" lengthAdjust="spacingAndGlyphs">第 4 张</text>
<text x="946" y="698.2" font-size="8.2" fill="#ff0000" font-weight="900" textLength="17.8" lengthAdjust="spacingAndGlyphs">比&#160;&#160;例</text>
<text x="946" y="707.5" font-size="8.2" fill="#ff0000" font-weight="900" textLength="17.8" lengthAdjust="spacingAndGlyphs">日&#160;&#160;期</text>
<text x="989.9" y="679.2" font-size="8.2" fill="#ff0000" font-weight="900" textLength="25.7" lengthAdjust="spacingAndGlyphs">CUMTSY-04</text>
<text x="992" y="688.7" font-size="8.2" fill="#ff0000" font-weight="900" textLength="19" lengthAdjust="spacingAndGlyphs">共 4 张</text>
<text x="993" y="698.2" font-size="8.2" fill="#ff0000" font-weight="900" textLength="9.4" lengthAdjust="spacingAndGlyphs">1:1</text>
<text x="993" y="707.5" font-size="8.2" fill="#ff0000" font-weight="900" textLength="17.3" lengthAdjust="spacingAndGlyphs">2015.6</text>
<g shape-rendering="crispEdges">
<rect x="104.5" y="354.5" width="248" height="285" stroke="#ff00c4" fill="none" stroke-width="1" />
<line x1="119.5" y1="399.5" x2="119.5" y2="626.5" stroke="#ff00c4" stroke-width="1" />
<line x1="119.5" y1="399.5" x2="134.5" y2="399.5" stroke="#ff00c4" stroke-width="1" />
<line x1="119.5" y1="626.5" x2="134.5" y2="626.5" stroke="#ff00c4" stroke-width="1" />
<line x1="145.5" y1="399.5" x2="145.5" y2="626.5" stroke="#ff00c4" stroke-width="1" />
<line x1="145.5" y1="626.5" x2="315.5" y2="626.5" stroke="#ff00c4" stroke-width="1" />
<line x1="145.5" y1="399.5" x2="336" y2="399.5" stroke="#ff00c4" stroke-width="1" />
<line x1="315.5" y1="380" x2="315.5" y2="626.5" stroke="#ff00c4" stroke-width="1" />
<line x1="145.6" y1="417.5" x2="153.9" y2="417.5" stroke="#ff00c4" stroke-width="1" />
<line x1="162" y1="417.5" x2="170.1" y2="417.5" stroke="#ff00c4" stroke-width="1" />
<line x1="175.9" y1="417.5" x2="184" y2="417.5" stroke="#ff00c4" stroke-width="1" />
<line x1="190.4" y1="417.5" x2="198.4" y2="417.5" stroke="#ff00c4" stroke-width="1" />
<line x1="205.1" y1="417.5" x2="213.1" y2="417.5" stroke="#ff00c4" stroke-width="1" />
<line x1="219.5" y1="417.5" x2="228.8" y2="417.5" stroke="#ff00c4" stroke-width="1" />
<line x1="233.9" y1="417.5" x2="242" y2="417.5" stroke="#ff00c4" stroke-width="1" />
<line x1="263.2" y1="417.5" x2="270.8" y2="417.5" stroke="#ff00c4" stroke-width="1" />
<line x1="277" y1="417.5" x2="285" y2="417.5" stroke="#ff00c4" stroke-width="1" />
<line x1="291.1" y1="417.5" x2="299" y2="417.5" stroke="#ff00c4" stroke-width="1" />
<line x1="306.6" y1="417.5" x2="315.1" y2="417.5" stroke="#ff00c4" stroke-width="1" />
<line x1="222.5" y1="399.5" x2="222.5" y2="588.5" stroke="#ff00c4" stroke-width="1" />
<line x1="222.5" y1="588.5" x2="232.5" y2="588.5" stroke="#ff00c4" stroke-width="1" />
<rect x="248.5" y="399.5" width="10" height="189" stroke="#00ffff" fill="#ff00c4" stroke-width="1" />
<line x1="249" y1="399.5" x2="258" y2="399.5" stroke="#ff00c4" stroke-width="1" />
<line x1="331.5" y1="399.5" x2="331.5" y2="523.5" stroke="#ff00c4" stroke-width="1" />
<line x1="315.5" y1="523.5" x2="331.5" y2="523.5" stroke="#ff00c4" stroke-width="1" />
<line x1="276.5" y1="493.5" x2="288.5" y2="493.5" stroke="#ff00c4" stroke-width="1" />
<line x1="276.5" y1="493.5" x2="276.5" y2="553.5" stroke="#ff00c4" stroke-width="1" />
<line x1="276.5" y1="553.5" x2="288.5" y2="553.5" stroke="#ff00c4" stroke-width="1" />
<line x1="253.5" y1="597" x2="253.5" y2="612.5" stroke="#ff00c4" stroke-width="1" />
<line x1="287.5" y1="597" x2="287.5" y2="612.5" stroke="#ff00c4" stroke-width="1" />
<line x1="253.5" y1="612.5" x2="315.5" y2="612.5" stroke="#ff00c4" stroke-width="1" />
<line x1="170" y1="384.5" x2="210.5" y2="384.5" stroke="#ff00c4" stroke-width="1" />
<line x1="175" y1="409.5" x2="181.75" y2="409.5" stroke="#ff00c4" stroke-width="1" />
<line x1="265" y1="408.5" x2="271.75" y2="408.5" stroke="#ff00c4" stroke-width="1" />
<line x1="294.25" y1="409.5" x2="300.75" y2="409.5" stroke="#ff00c4" stroke-width="1" />
<line x1="230" y1="437.5" x2="232.7" y2="437.5" stroke="#ff00c4" stroke-width="1" />
<line x1="234.3" y1="437.5" x2="237" y2="437.5" stroke="#ff00c4" stroke-width="1" />
<line x1="289.5" y1="436.5" x2="291.82" y2="436.5" stroke="#ff00c4" stroke-width="1" />
<line x1="293.43" y1="436.5" x2="295.75" y2="436.5" stroke="#ff00c4" stroke-width="1" />
<line x1="150" y1="446.5" x2="156.75" y2="446.5" stroke="#ff00c4" stroke-width="1" />
<line x1="180" y1="445.5" x2="182.57" y2="445.5" stroke="#ff00c4" stroke-width="1" />
<line x1="184.18" y1="445.5" x2="186.75" y2="445.5" stroke="#ff00c4" stroke-width="1" />
<line x1="271.25" y1="459.5" x2="277" y2="459.5" stroke="#ff00c4" stroke-width="1" />
<line x1="205" y1="465.5" x2="207.57" y2="465.5" stroke="#ff00c4" stroke-width="1" />
<line x1="209.18" y1="465.5" x2="211.75" y2="465.5" stroke="#ff00c4" stroke-width="1" />
<line x1="292.5" y1="479.5" x2="294.82" y2="479.5" stroke="#ff00c4" stroke-width="1" />
<line x1="296.43" y1="479.5" x2="298.75" y2="479.5" stroke="#ff00c4" stroke-width="1" />
<line x1="157" y1="484.5" x2="163.75" y2="484.5" stroke="#ff00c4" stroke-width="1" />
<line x1="229.25" y1="487.5" x2="235.75" y2="487.5" stroke="#ff00c4" stroke-width="1" />
<line x1="178" y1="509.5" x2="185" y2="509.5" stroke="#ff00c4" stroke-width="1" />
<line x1="157" y1="515.5" x2="163.75" y2="515.5" stroke="#ff00c4" stroke-width="1" />
<line x1="157" y1="515.5" x2="163.75" y2="515.5" stroke="#ff00c4" stroke-width="1" />
<line x1="178" y1="509.5" x2="185" y2="509.5" stroke="#ff00c4" stroke-width="1" />
<line x1="187" y1="537.5" x2="193.75" y2="537.5" stroke="#ff00c4" stroke-width="1" />
<line x1="210" y1="548.5" x2="216.75" y2="548.5" stroke="#ff00c4" stroke-width="1" />
<line x1="232" y1="552.5" x2="238.75" y2="552.5" stroke="#ff00c4" stroke-width="1" />
<line x1="179.25" y1="558.5" x2="185.75" y2="558.5" stroke="#ff00c4" stroke-width="1" />
<line x1="154.25" y1="585.5" x2="160.75" y2="585.5" stroke="#ff00c4" stroke-width="1" />
<line x1="199.25" y1="588.5" x2="201.7" y2="588.5" stroke="#ff00c4" stroke-width="1" />
<line x1="203.3" y1="588.5" x2="205.75" y2="588.5" stroke="#ff00c4" stroke-width="1" />
<line x1="172" y1="600.5" x2="178.75" y2="600.5" stroke="#ff00c4" stroke-width="1" />
<line x1="219.25" y1="608.5" x2="225.75" y2="608.5" stroke="#ff00c4" stroke-width="1" />
<line x1="274.25" y1="568.5" x2="276.7" y2="568.5" stroke="#ff00c4" stroke-width="1" />
<line x1="278.3" y1="568.5" x2="280.75" y2="568.5" stroke="#ff00c4" stroke-width="1" />
<line x1="293" y1="574.5" x2="300" y2="574.5" stroke="#ff00c4" stroke-width="1" />
</g>
<line x1="170" y1="384.5" x2="163.5" y2="417.5" stroke="#ff00c4" stroke-width="1" shape-rendering="crispEdges"/>
<path d="M315 366.5 h1 v3 h.7 v3 h.6 v6 h1.2 v3 h-6 v-3 h1.2 v-6 h.6 v-3 h.7 Z" fill="#ff00c4" shape-rendering="crispEdges"/>
<line x1="315.5" y1="366" x2="315.5" y2="381" stroke="#ff00c4" stroke-width="1" />
<path d="M335.3 397 h3.2 v.8 h6.5 v.7 h2.5 v.6 h2.5 v1 h-2.5 v.5 h-2.5 v.8 h-6.5 v.9 h-3.2 Z" fill="#ff00c4" shape-rendering="crispEdges"/>
<path d="M315.5 496.2 L308.38 497.14 L301.75 499.88 L296.05 504.25 L291.68 509.95 L288.94 516.58 L288 523.7 L288.94 530.82 L291.68 537.45 L296.05 543.15 L301.75 547.52 L308.38 550.26 L315.5 551.2" stroke="#00ffff" fill="none" stroke-width="1.2" />
<text x="285" y="372.5" font-size="5" fill="#ffffff" text-anchor="start" font-weight="700" >Y</text>
<text x="317" y="391" font-size="5" fill="#ffffff" text-anchor="start" font-weight="700" >X</text>
<text x="287" y="394.5" font-size="5" fill="#ffffff" text-anchor="start" font-weight="700" >O</text>
<text x="170" y="382" font-size="6.2" fill="#ffffff" text-anchor="start" font-weight="700" >地下水位线</text>
<text x="219" y="428" font-size="5" fill="#ffffff" text-anchor="middle" transform="rotate(-90 219 428)" font-weight="700" >1.5</text>
<text x="327.5" y="480" font-size="5" fill="#ffffff" text-anchor="middle" transform="rotate(-90 327.5 480)" font-weight="700" >20</text>
<text x="164.5" y="478.5" font-size="5.5" fill="#ffffff" text-anchor="start" font-weight="700" >土体</text>
<text x="250" y="440.5" font-size="5.5" fill="#ffb0ff" text-anchor="start" >桩</text>
<text x="115" y="531.5" font-size="5" fill="#ffffff" text-anchor="middle" transform="rotate(-90 115 531.5)" font-weight="700" >40</text>
<text x="221" y="525" font-size="5" fill="#ffffff" text-anchor="middle" transform="rotate(-90 221 525)" font-weight="700" >27.5</text>
<text x="269" y="545" font-size="5" fill="#ffffff" text-anchor="middle" transform="rotate(-90 269 545)" font-weight="700" >6</text>
<text x="250.5" y="607" font-size="5" fill="#ffffff" text-anchor="start" font-weight="700" >3</text>
<text x="280.5" y="607" font-size="5" fill="#ffffff" text-anchor="start" font-weight="700" >3</text>
<g shape-rendering="crispEdges">
<rect x="418.5" y="355.5" width="266" height="282" stroke="#ff00c4" fill="none" stroke-width="1" />
<line x1="438.5" y1="374.5" x2="438.5" y2="633.5" stroke="#ff00c4" stroke-width="1" />
<line x1="438.5" y1="374.5" x2="453.5" y2="374.5" stroke="#ff00c4" stroke-width="1" />
<line x1="438.5" y1="633.5" x2="453.5" y2="633.5" stroke="#ff00c4" stroke-width="1" />
<line x1="459" y1="633.5" x2="651" y2="633.5" stroke="#ff00c4" stroke-width="1" />
<line x1="459" y1="374.5" x2="631" y2="374.5" stroke="#00ffff" stroke-width="1" />
<line x1="575.5" y1="365.5" x2="630.5" y2="365.5" stroke="#ff00c4" stroke-width="1" />
<line x1="575.5" y1="365.5" x2="575.5" y2="372" stroke="#ff00c4" stroke-width="1" />
<line x1="602.5" y1="365.5" x2="602.5" y2="374" stroke="#ff00c4" stroke-width="1" />
<line x1="630.5" y1="365.5" x2="630.5" y2="374" stroke="#ff00c4" stroke-width="1" />
<line x1="602.5" y1="384.5" x2="613" y2="384.5" stroke="#00ffff" stroke-width="1" />
<line x1="621" y1="384.5" x2="632" y2="384.5" stroke="#00ffff" stroke-width="1" />
<line x1="635" y1="384.5" x2="648" y2="384.5" stroke="#00ffff" stroke-width="1" />
<line x1="602.5" y1="399.5" x2="613" y2="399.5" stroke="#00ffff" stroke-width="1" />
<line x1="621" y1="399.5" x2="632" y2="399.5" stroke="#00ffff" stroke-width="1" />
<line x1="635" y1="399.5" x2="648" y2="399.5" stroke="#00ffff" stroke-width="1" />
<line x1="602.5" y1="417.5" x2="613" y2="417.5" stroke="#00ffff" stroke-width="1" />
<line x1="621" y1="417.5" x2="632" y2="417.5" stroke="#00ffff" stroke-width="1" />
<line x1="635" y1="417.5" x2="648" y2="417.5" stroke="#00ffff" stroke-width="1" />
<line x1="602.5" y1="432.5" x2="613" y2="432.5" stroke="#00ffff" stroke-width="1" />
<line x1="621" y1="432.5" x2="632" y2="432.5" stroke="#00ffff" stroke-width="1" />
<line x1="635" y1="432.5" x2="648" y2="432.5" stroke="#00ffff" stroke-width="1" />
<line x1="647.5" y1="432.5" x2="647.5" y2="434.1" stroke="#00ffff" stroke-width="1" />
<line x1="602.5" y1="449.5" x2="613" y2="449.5" stroke="#00ffff" stroke-width="1" />
<line x1="621" y1="449.5" x2="632" y2="449.5" stroke="#00ffff" stroke-width="1" />
<line x1="635" y1="449.5" x2="648" y2="449.5" stroke="#00ffff" stroke-width="1" />
<line x1="647.5" y1="449.5" x2="647.5" y2="451.1" stroke="#00ffff" stroke-width="1" />
<line x1="602.5" y1="466.5" x2="613" y2="466.5" stroke="#00ffff" stroke-width="1" />
<line x1="621" y1="466.5" x2="632" y2="466.5" stroke="#00ffff" stroke-width="1" />
<line x1="635" y1="466.5" x2="648" y2="466.5" stroke="#00ffff" stroke-width="1" />
<line x1="647.5" y1="466.5" x2="647.5" y2="468.1" stroke="#00ffff" stroke-width="1" />
<line x1="602.5" y1="478.5" x2="613" y2="478.5" stroke="#00ffff" stroke-width="1" />
<line x1="621" y1="478.5" x2="632" y2="478.5" stroke="#00ffff" stroke-width="1" />
<line x1="635" y1="478.5" x2="648" y2="478.5" stroke="#00ffff" stroke-width="1" />
<line x1="647.5" y1="478.5" x2="647.5" y2="480.1" stroke="#00ffff" stroke-width="1" />
<line x1="602.5" y1="490.5" x2="613" y2="490.5" stroke="#00ffff" stroke-width="1" />
<line x1="621" y1="490.5" x2="632" y2="490.5" stroke="#00ffff" stroke-width="1" />
<line x1="635" y1="490.5" x2="648" y2="490.5" stroke="#00ffff" stroke-width="1" />
<line x1="647.5" y1="490.5" x2="647.5" y2="492.1" stroke="#00ffff" stroke-width="1" />
<line x1="602.5" y1="502.5" x2="613" y2="502.5" stroke="#00ffff" stroke-width="1" />
<line x1="621" y1="502.5" x2="632" y2="502.5" stroke="#00ffff" stroke-width="1" />
<line x1="635" y1="502.5" x2="648" y2="502.5" stroke="#00ffff" stroke-width="1" />
<line x1="647.5" y1="502.5" x2="647.5" y2="504.1" stroke="#00ffff" stroke-width="1" />
<line x1="602.5" y1="518.5" x2="613" y2="518.5" stroke="#00ffff" stroke-width="1" />
<line x1="621" y1="518.5" x2="632" y2="518.5" stroke="#00ffff" stroke-width="1" />
<line x1="635" y1="518.5" x2="648" y2="518.5" stroke="#00ffff" stroke-width="1" />
<line x1="647.5" y1="518.5" x2="647.5" y2="520.1" stroke="#00ffff" stroke-width="1" />
<line x1="602.5" y1="536.5" x2="613" y2="536.5" stroke="#00ffff" stroke-width="1" />
<line x1="621" y1="536.5" x2="632" y2="536.5" stroke="#00ffff" stroke-width="1" />
<line x1="635" y1="536.5" x2="648" y2="536.5" stroke="#00ffff" stroke-width="1" />
<line x1="647.5" y1="536.5" x2="647.5" y2="538.1" stroke="#00ffff" stroke-width="1" />
<line x1="602.5" y1="551.5" x2="613" y2="551.5" stroke="#00ffff" stroke-width="1" />
<line x1="621" y1="551.5" x2="632" y2="551.5" stroke="#00ffff" stroke-width="1" />
<line x1="635" y1="551.5" x2="648" y2="551.5" stroke="#00ffff" stroke-width="1" />
<line x1="647.5" y1="551.5" x2="647.5" y2="553.1" stroke="#00ffff" stroke-width="1" />
<line x1="602.5" y1="569.5" x2="613" y2="569.5" stroke="#00ffff" stroke-width="1" />
<line x1="621" y1="569.5" x2="632" y2="569.5" stroke="#00ffff" stroke-width="1" />
<line x1="635" y1="569.5" x2="648" y2="569.5" stroke="#00ffff" stroke-width="1" />
<line x1="647.5" y1="569.5" x2="647.5" y2="571.1" stroke="#00ffff" stroke-width="1" />
<line x1="602.5" y1="584.5" x2="613" y2="584.5" stroke="#00ffff" stroke-width="1" />
<line x1="621" y1="584.5" x2="632" y2="584.5" stroke="#00ffff" stroke-width="1" />
<line x1="635" y1="584.5" x2="648" y2="584.5" stroke="#00ffff" stroke-width="1" />
<line x1="647.5" y1="584.5" x2="647.5" y2="586.1" stroke="#00ffff" stroke-width="1" />
<line x1="602.5" y1="384.5" x2="602.5" y2="390.7" stroke="#00ffff" stroke-width="1" />
<line x1="602.5" y1="399.5" x2="602.5" y2="405.8" stroke="#00ffff" stroke-width="1" />
<line x1="602.5" y1="407.8" x2="602.5" y2="413.9" stroke="#00ffff" stroke-width="1" />
<line x1="602.5" y1="417.5" x2="602.5" y2="428.7" stroke="#00ffff" stroke-width="1" />
<line x1="602.5" y1="432.5" x2="602.5" y2="439.5" stroke="#00ffff" stroke-width="1" />
<line x1="602.5" y1="440.9" x2="602.5" y2="447.6" stroke="#00ffff" stroke-width="1" />
<line x1="602.5" y1="449.5" x2="602.5" y2="456.8" stroke="#00ffff" stroke-width="1" />
<line x1="602.5" y1="458.2" x2="602.5" y2="464.3" stroke="#00ffff" stroke-width="1" />
<line x1="602.5" y1="466.5" x2="602.5" y2="473.7" stroke="#00ffff" stroke-width="1" />
<line x1="602.5" y1="478.5" x2="602.5" y2="485.1" stroke="#00ffff" stroke-width="1" />
<line x1="602.5" y1="490.5" x2="602.5" y2="496.8" stroke="#00ffff" stroke-width="1" />
<line x1="602.5" y1="502.5" x2="602.5" y2="509.8" stroke="#00ffff" stroke-width="1" />
<line x1="602.5" y1="518.5" x2="602.5" y2="525.6" stroke="#00ffff" stroke-width="1" />
<line x1="602.5" y1="527" x2="602.5" y2="533" stroke="#00ffff" stroke-width="1" />
<line x1="602.5" y1="536.5" x2="602.5" y2="542.8" stroke="#00ffff" stroke-width="1" />
<line x1="602.5" y1="544.2" x2="602.5" y2="549.6" stroke="#00ffff" stroke-width="1" />
<line x1="602.5" y1="551.5" x2="602.5" y2="559" stroke="#00ffff" stroke-width="1" />
<line x1="602.5" y1="561" x2="602.5" y2="567.8" stroke="#00ffff" stroke-width="1" />
<line x1="602.5" y1="569.5" x2="602.5" y2="576.5" stroke="#00ffff" stroke-width="1" />
<line x1="602.5" y1="578.3" x2="602.5" y2="584.5" stroke="#00ffff" stroke-width="1" />
<line x1="602.5" y1="374.5" x2="602.5" y2="378.6" stroke="#00ffff" stroke-width="1" />
<line x1="603.5" y1="590" x2="603.5" y2="633.6" stroke="#00ffff" stroke-width="1" stroke-dasharray="6.7 7"/>
<rect x="568.5" y="477.5" width="14" height="13" stroke="#00ffff" fill="none" stroke-width="1" />
<line x1="562.5" y1="478.5" x2="562.5" y2="490.5" stroke="#ff00c4" stroke-width="1" />
<line x1="562.5" y1="478.5" x2="568" y2="478.5" stroke="#ff00c4" stroke-width="1" />
<line x1="562.5" y1="490.5" x2="568" y2="490.5" stroke="#ff00c4" stroke-width="1" />
<line x1="568.5" y1="495.5" x2="582.5" y2="495.5" stroke="#ff00c4" stroke-width="1" />
<line x1="568.5" y1="492.5" x2="568.5" y2="495.5" stroke="#ff00c4" stroke-width="1" />
<line x1="582.5" y1="492.5" x2="582.5" y2="495.5" stroke="#ff00c4" stroke-width="1" />
<line x1="620.5" y1="588" x2="620.5" y2="633.5" stroke="#ff00c4" stroke-width="1" />
<rect x="619" y="592.3" width="3" height="7" stroke="#ff00c4" fill="#ff00c4" stroke-width="0" />
<rect x="618" y="599.3" width="5" height="3.7" stroke="#ff00c4" fill="#ff00c4" stroke-width="0" />
<line x1="537.28" y1="393.5" x2="544.1" y2="393.5" stroke="#ff00c4" stroke-width="1" />
<line x1="483.04" y1="404.5" x2="485.65" y2="404.5" stroke="#ff00c4" stroke-width="1" />
<line x1="487.25" y1="404.5" x2="489.86" y2="404.5" stroke="#ff00c4" stroke-width="1" />
<line x1="563.99" y1="404.5" x2="566.6" y2="404.5" stroke="#ff00c4" stroke-width="1" />
<line x1="568.2" y1="404.5" x2="570.81" y2="404.5" stroke="#ff00c4" stroke-width="1" />
<line x1="543.01" y1="417.5" x2="549.82" y2="417.5" stroke="#ff00c4" stroke-width="1" />
<line x1="567.26" y1="439.5" x2="569.87" y2="439.5" stroke="#ff00c4" stroke-width="1" />
<line x1="571.47" y1="439.5" x2="574.08" y2="439.5" stroke="#ff00c4" stroke-width="1" />
<line x1="478.96" y1="442.5" x2="485.77" y2="442.5" stroke="#ff00c4" stroke-width="1" />
<line x1="521.2" y1="451.5" x2="527.2" y2="451.5" stroke="#ff00c4" stroke-width="1" />
<line x1="549.82" y1="458.5" x2="557.18" y2="458.5" stroke="#ff00c4" stroke-width="1" />
<line x1="495.04" y1="478.5" x2="497.64" y2="478.5" stroke="#ff00c4" stroke-width="1" />
<line x1="499.24" y1="478.5" x2="501.85" y2="478.5" stroke="#ff00c4" stroke-width="1" />
<line x1="533.19" y1="500.5" x2="535.8" y2="500.5" stroke="#ff00c4" stroke-width="1" />
<line x1="537.4" y1="500.5" x2="540.01" y2="500.5" stroke="#ff00c4" stroke-width="1" />
<line x1="478.14" y1="507.5" x2="484.95" y2="507.5" stroke="#ff00c4" stroke-width="1" />
<line x1="521.2" y1="513.5" x2="528.02" y2="513.5" stroke="#ff00c4" stroke-width="1" />
<line x1="578.98" y1="517.5" x2="585.8" y2="517.5" stroke="#ff00c4" stroke-width="1" />
<line x1="556.36" y1="524.5" x2="563.18" y2="524.5" stroke="#ff00c4" stroke-width="1" />
<line x1="474.05" y1="541.5" x2="476.66" y2="541.5" stroke="#ff00c4" stroke-width="1" />
<line x1="478.26" y1="541.5" x2="480.86" y2="541.5" stroke="#ff00c4" stroke-width="1" />
<line x1="568.9" y1="543.5" x2="575.71" y2="543.5" stroke="#ff00c4" stroke-width="1" />
<line x1="540.28" y1="548.5" x2="547.09" y2="548.5" stroke="#ff00c4" stroke-width="1" />
<line x1="506.21" y1="556.5" x2="513.03" y2="556.5" stroke="#ff00c4" stroke-width="1" />
<line x1="513.03" y1="573.5" x2="519.84" y2="573.5" stroke="#ff00c4" stroke-width="1" />
<line x1="568.9" y1="579.5" x2="575.71" y2="579.5" stroke="#ff00c4" stroke-width="1" />
<line x1="553.5" y1="505.5" x2="557.5" y2="505.5" stroke="#ffffff" stroke-width="1" />
</g>
<path d="M650 630 h3.6 v1.2 h4.2 v.8 h5 v1 h3 v1 h-3 v.5 h-5 v.5 h-4.2 v1 h-3.6 Z" fill="#ff00c4" shape-rendering="crispEdges"/>
<text x="570.5" y="364.5" font-size="5" fill="#ffffff" text-anchor="middle" font-weight="700" >3</text>
<text x="598" y="364" font-size="5" fill="#ffffff" text-anchor="middle" font-weight="700" >3</text>
<text x="575" y="386.8" font-size="5" fill="#ffffff" text-anchor="middle" font-weight="700" >S</text>
<text x="575" y="402.8" font-size="5" fill="#ffffff" text-anchor="middle" font-weight="700" >R</text>
<text x="575" y="417.3" font-size="5" fill="#ffffff" text-anchor="middle" font-weight="700" >Q</text>
<text x="575" y="436.8" font-size="5" fill="#ffffff" text-anchor="middle" font-weight="700" >P</text>
<text x="575" y="451.3" font-size="5" fill="#ffffff" text-anchor="middle" font-weight="700" >N</text>
<text x="575" y="467.8" font-size="5" fill="#ffffff" text-anchor="middle" font-weight="700" >M</text>
<text x="575" y="479.8" font-size="5" fill="#ffffff" text-anchor="middle" font-weight="700" >L</text>
<text x="575" y="494.3" font-size="5" fill="#ffffff" text-anchor="middle" font-weight="700" >K</text>
<text x="575" y="507.3" font-size="5" fill="#ffffff" text-anchor="middle" font-weight="700" >J</text>
<text x="575" y="521.8" font-size="5" fill="#ffffff" text-anchor="middle" font-weight="700" >I</text>
<text x="575" y="542.3" font-size="5" fill="#ffffff" text-anchor="middle" font-weight="700" >H</text>
<text x="575" y="554.8" font-size="5" fill="#ffffff" text-anchor="middle" font-weight="700" >G</text>
<text x="575" y="570.8" font-size="5" fill="#ffffff" text-anchor="middle" font-weight="700" >F</text>
<text x="575" y="587.8" font-size="5" fill="#ffffff" text-anchor="middle" font-weight="700" >E</text>
<text x="551.5" y="474" font-size="5.5" fill="#ffffff" text-anchor="start" font-weight="700" >桩</text>
<text x="557" y="504" font-size="5" fill="#ffffff" text-anchor="middle" font-weight="700" >1</text>
<text x="489.5" y="426.5" font-size="5.5" fill="#ffffff" text-anchor="start" font-weight="700" >土体</text>
<text x="435.5" y="513" font-size="5" fill="#ffffff" text-anchor="middle" transform="rotate(-90 435.5 513)" font-weight="700" >60</text>
<text x="644" y="411" font-size="4" fill="#ffffff" text-anchor="middle" transform="rotate(-90 644 411)" font-weight="700" >3</text>
<text x="644" y="430" font-size="4" fill="#ffffff" text-anchor="middle" transform="rotate(-90 644 430)" font-weight="700" >3</text>
<text x="644" y="445" font-size="4" fill="#ffffff" text-anchor="middle" transform="rotate(-90 644 445)" font-weight="700" >3</text>
<text x="644" y="462" font-size="4" fill="#ffffff" text-anchor="middle" transform="rotate(-90 644 462)" font-weight="700" >3</text>
<text x="644" y="478" font-size="4" fill="#ffffff" text-anchor="middle" transform="rotate(-90 644 478)" font-weight="700" >3</text>
<text x="644" y="486" font-size="4" fill="#ffffff" text-anchor="middle" transform="rotate(-90 644 486)" font-weight="700" >3</text>
<text x="644" y="492" font-size="4" fill="#ffffff" text-anchor="middle" transform="rotate(-90 644 492)" font-weight="700" >3</text>
<text x="644" y="507" font-size="4" fill="#ffffff" text-anchor="middle" transform="rotate(-90 644 507)" font-weight="700" >3</text>
<text x="644" y="512" font-size="4" fill="#ffffff" text-anchor="middle" transform="rotate(-90 644 512)" font-weight="700" >3</text>
<text x="644" y="519" font-size="4" fill="#ffffff" text-anchor="middle" transform="rotate(-90 644 519)" font-weight="700" >3</text>
<text x="644" y="531" font-size="4" fill="#ffffff" text-anchor="middle" transform="rotate(-90 644 531)" font-weight="700" >3</text>
<text x="644" y="548" font-size="4" fill="#ffffff" text-anchor="middle" transform="rotate(-90 644 548)" font-weight="700" >3</text>
<text x="644" y="564" font-size="4" fill="#ffffff" text-anchor="middle" transform="rotate(-90 644 564)" font-weight="700" >3</text>
<text x="644" y="580" font-size="4" fill="#ffffff" text-anchor="middle" transform="rotate(-90 644 580)" font-weight="700" >3</text>
<text x="644" y="596" font-size="4" fill="#ffffff" text-anchor="middle" transform="rotate(-90 644 596)" font-weight="700" >3</text>
<text x="641" y="630" font-size="5" fill="#ffffff" text-anchor="middle" font-weight="700" >25</text>
<text x="593.5" y="594" font-size="5.5" fill="#ffffff" text-anchor="middle" font-weight="700" >推</text>
<text x="593.5" y="605" font-size="5.5" fill="#ffffff" text-anchor="middle" font-weight="700" >进</text>
<text x="593.5" y="617.5" font-size="5.5" fill="#ffffff" text-anchor="middle" font-weight="700" >方</text>
<text x="593.5" y="628.5" font-size="5.5" fill="#ffffff" text-anchor="middle" font-weight="700" >向</text>
</svg>
<div id="tb"></div>
<svg id="tbi" width="1064" height="27" viewBox="0 0 1064 27">
<defs>
<linearGradient id="pg" x1="0" y1="0" x2="1" y2="1"><stop offset="0" stop-color="#f4f8fc"/><stop offset="1" stop-color="#b8d0e6"/></linearGradient>
<linearGradient id="hb" x1="0" y1="0" x2="0" y2="1"><stop offset="0" stop-color="#3a78c0"/><stop offset="1" stop-color="#14407c"/></linearGradient>
<radialGradient id="lens" cx="0.35" cy="0.35" r="0.8"><stop offset="0" stop-color="#ffffff"/><stop offset="1" stop-color="#a8c8e8"/></radialGradient>
<radialGradient id="gl" cx="0.35" cy="0.35" r="0.8"><stop offset="0" stop-color="#7ac0f0"/><stop offset="1" stop-color="#1a5ab0"/></radialGradient>
</defs>
<!-- separators -->
<g stroke="#8a8a8a" stroke-width="1" shape-rendering="crispEdges">
<line x1="5.5" y1="3" x2="5.5" y2="21"/><line x1="103.5" y1="3" x2="103.5" y2="21"/><line x1="224.5" y1="3" x2="224.5" y2="21"/><line x1="302.5" y1="3" x2="302.5" y2="21"/><line x1="400.5" y1="3" x2="400.5" y2="21"/><line x1="544.5" y1="3" x2="544.5" y2="21"/>
</g>
<!-- printer -->
<g>
<path d="M15.6 6.3 L23 5.4 L24.6 11 L17.6 12 Z" fill="#fff" stroke="#9aa4c8" stroke-width=".7"/>
<path d="M14 12.4 L17.4 11.2 L25.4 10.2 L27.2 12 L27 15.4 L20.4 18.9 L13.8 15.8 Z" fill="#c4cae6" stroke="#4e5a94" stroke-width="1"/>
<path d="M14 12.6 L20.6 15 L27 12.2" stroke="#4e5a94" fill="none" stroke-width=".8"/>
<path d="M17 15.6 L23.4 13.8 L26.2 14.9 L20.4 17.5 Z" fill="#fff" stroke="#6a78b0" stroke-width=".5"/>
</g>
<!-- preview -->
<g>
<path d="M35.5 4.8 H47.5 L50.5 7.8 V16.6 H35.5 Z" fill="url(#pg)" stroke="#3a70be" stroke-width="1.1"/>
<path d="M47.5 4.8 V7.8 H50.5" fill="none" stroke="#3a70be" stroke-width="0.8"/>
<line x1="44" y1="14.5" x2="39" y2="19.4" stroke="#a8642c" stroke-width="1.8" stroke-linecap="round"/>
<circle cx="46.3" cy="11.8" r="3.4" fill="url(#lens)" stroke="#4a6a90" stroke-width="1.1"/>
</g>
<!-- publish -->
<g>
<circle cx="68.5" cy="9.5" r="5.2" fill="url(#gl)" stroke="#2a5a9a" stroke-width="0.6"/>
<path d="M66 5.5 Q71 8 70 14" stroke="#8ee08e" stroke-width="1" fill="none"/>
<path d="M58.5 5.8 L64.5 4.6 L66.5 10.5 L60 12 Z" fill="#f0c828" stroke="#b8900c" stroke-width="0.7"/>
<path d="M61.5 7 l2 -0.4 M62 8.8 l2 -0.4" stroke="#fff" stroke-width="0.9"/>
<path d="M58 13 L61.4 11.8 L69.4 10.8 L71.2 12.6 L71 16 L64.4 19.5 L57.8 16.4 Z" fill="#c4cae6" stroke="#4e5a94" stroke-width="1"/>
<path d="M58 13.2 L64.6 15.6 L71 12.8" stroke="#4e5a94" fill="none" stroke-width=".8"/>
<path d="M61 16.2 L67.4 14.4 L70.2 15.5 L64.4 18.1 Z" fill="#fff" stroke="#6a78b0" stroke-width=".5"/>
</g>
<!-- 3d globe -->
<g>
<path d="M81.5 9.5 L86.5 12 L92 17 L87 19.5 L81.5 16.8 Z" fill="#c4d4e6" stroke="#98aac4" stroke-width="0.6"/>
<path d="M87 19.5 L92 17 L95 12" fill="none" stroke="#d8e0ec" stroke-width="1"/>
<circle cx="91.5" cy="10" r="6.3" fill="url(#gl)" stroke="#2a5a9a" stroke-width="0.6"/>
<path d="M86 8 Q91 11 97 7" stroke="#f0d020" stroke-width="1.1" fill="none"/>
<path d="M88.5 5 Q86 11 90.5 16" stroke="#e83020" stroke-width="1.1" fill="none"/>
<path d="M87 14 Q93 13 97.5 10.5" stroke="#50d050" stroke-width="1.1" fill="none"/>
</g>
<!-- scissors -->
<g fill="none">
<path d="M110.2 9 L121.6 13.4" stroke="#6676a8" stroke-width="1"/>
<path d="M110.6 13.8 L121.4 10.8" stroke="#3a4a80" stroke-width="1"/>
<circle cx="123.4" cy="9.8" r="1.9" stroke="#16245c" stroke-width="1.2"/><circle cx="123.2" cy="15.2" r="2.1" stroke="#16245c" stroke-width="1.2"/>
</g>
<!-- copy -->
<g>
<path d="M133 5.2 H142 L144.8 8 V15.5 H133 Z" fill="url(#pg)" stroke="#3a70be" stroke-width="1.1"/>
<path d="M135.6 8.3 H146 L149 11.3 V18.6 H135.6 Z" fill="url(#pg)" stroke="#3a70be" stroke-width="1.1"/>
<path d="M146 8.3 V11.3 H149" fill="none" stroke="#3a70be" stroke-width="0.8"/>
</g>
<!-- paste -->
<g>
<path d="M159.5 5.5 L167 6.5 L171.2 12 L168 18 L160.5 19.4 L156.3 11 Z" fill="#e8c860" stroke="#b8901c" stroke-width="1.1"/>
<path d="M160 5.8 Q162.5 3.2 165 5.6 L166.5 7 L159.5 7.4 Z" fill="#f0f0f4" stroke="#8890a8" stroke-width="0.6"/>
<path d="M158.8 7.8 H165.5 L167.8 10 V15.5 H158.8 Z" fill="url(#pg)" stroke="#3a70be" stroke-width="0.9"/>
</g>
<!-- brush -->
<g>
<path d="M186.5 12.5 L192.5 7.2 L193.8 8.4 L188 14 Z" fill="#c08050" stroke="#8a5428" stroke-width="0.5"/>
<path d="M181.4 17.2 Q184 13.5 186.5 12.5 L188 14 Q186 16.5 181.4 17.2 Z" fill="#2a2a2a"/>
<path d="M185.4 13 L187.6 15" stroke="#b8b8b8" stroke-width="1"/>
</g>
<!-- match properties -->
<g>
<path d="M213.5 4.4 L217.8 4.8 L214.2 9.4 L217 9.8 L210 16.4 L212 11.2 L209.2 10.8 Z" fill="#f8d830" stroke="#c8a010" stroke-width="0.7"/>
<rect x="203.8" y="12.2" width="7" height="6.4" fill="#f09060" stroke="#2a60b0" stroke-width="1"/>
<rect x="202.2" y="17.4" width="2.6" height="2.6" fill="#1a70e0"/>
</g>
<!-- undo -->
<path d="M231 13.9 L236 19.6 L241.4 14.3 L239.4 14.3 Q240.8 8.2 246.6 9.2 L246.9 7 Q243.5 3.4 239 5.4 Q235.4 8 235.1 13.9 Z" fill="#19386e"/>
<path d="M255.4 10 H260.8 L258.1 12.9 Z" fill="#16166a"/>
<!-- redo -->
<path d="M 282.4 13.9 L 277.4 19.6 L 272.0 14.3 L 274.0 14.3 Q 273.1 9.2 267.0 9.4 L 266.6 6.6 Q 269.9 3.0 274.4 5.4 Q 278.0 8.0 278.3 13.9 Z" fill="#c6c8cb"/>
<path d="M291.4 10 H296.6 L294 12.8 Z" fill="#c0c0cc"/>
<!-- pan -->
<g>
<path d="M309.6 7.6 L311.4 5.8 L314.6 6 L317 8.2 L319.6 9.8 L321.6 13 L318.8 17.2 L314.8 16.4 L311.6 13 Z" fill="#c98686" stroke="#a86464" stroke-width="0.6"/>
<path d="M310.6 8.4 L315.4 13.2 M312.2 7 L317 11.6 M314.2 6.6 L318.6 10.6" stroke="#e6b4b0" stroke-width="0.8"/>
<path d="M318.6 16.4 L322.4 13.6 L325.2 15.6 L325.2 19.6 L320 19.6 Z" fill="#2a5a98"/>
<path d="M321.4 4.4 V10.4 M318.4 7.4 H324.4" stroke="#1c4a8e" stroke-width="1"/>
<path d="M321.4 3.2 l1.6 1.9 h-3.2 Z M321.4 11.6 l1.6 -1.9 h-3.2 Z M317.2 7.4 l1.9 -1.6 v3.2 Z M325.6 7.4 l-1.9 -1.6 v3.2 Z" fill="#1c4a8e"/>
</g>
<!-- zoom realtime -->
<g>
<line x1="340.5" y1="13" x2="346" y2="18.2" stroke="#b06a2a" stroke-width="2" stroke-linecap="round"/>
<circle cx="337" cy="9.4" r="4.8" fill="url(#lens)" stroke="#505860" stroke-width="1.2"/>
<path d="M345.2 4.4 V8.4 M343.2 6.4 H347.2 M343.2 10.4 H347.2" stroke="#1a3a80" stroke-width="1.1"/>
</g>
<!-- zoom window -->
<g>
<line x1="364" y1="13" x2="368" y2="16.8" stroke="#b06a2a" stroke-width="2" stroke-linecap="round"/>
<circle cx="360.5" cy="9.4" r="4.9" fill="url(#lens)" stroke="#505860" stroke-width="1.2"/>
<rect x="358" y="7.2" width="4.6" height="4.4" fill="none" stroke="#1a3a80" stroke-width="1.1"/>
<path d="M357 8.6 H363.6 M361 6.2 V12.6" stroke="#1a3a80" stroke-width="0.7"/>
<path d="M371 16 V20 H367 Z" fill="#000"/>
</g>
<!-- zoom previous -->
<g>
<line x1="388.5" y1="13.6" x2="392.4" y2="18" stroke="#b06a2a" stroke-width="2" stroke-linecap="round"/>
<circle cx="384.5" cy="9.6" r="5.6" fill="url(#lens)" stroke="#505860" stroke-width="1.2"/>
<path d="M381.2 12.8 L381.8 7 L383.8 8.4 Q388 3 393.4 6.2 L392.8 8.8 Q388.8 6.6 386 10 L388 11.4 Z" fill="#1a3c78"/>
</g>
<!-- properties -->
<g>
<rect x="407" y="4.4" width="2.3" height="3" fill="#e02020"/><rect x="409.3" y="4.4" width="2.3" height="3" fill="#f0e020"/><rect x="411.6" y="4.4" width="2.3" height="3" fill="#20c020"/><rect x="413.9" y="4.4" width="2.3" height="3" fill="#20c0e0"/><rect x="416.2" y="4.4" width="2.3" height="3" fill="#6030e0"/><rect x="418.5" y="4.4" width="2.3" height="3" fill="#f06820"/>
<rect x="407.4" y="9.6" width="5.6" height="3" rx="1" fill="#d8d8a0" stroke="#607090" stroke-width="0.8"/>
<path d="M411 11 L417 7.6 L422 8 L422.4 11.4 L416 13.4 Z" fill="#e8a8a0" stroke="#b07878" stroke-width="0.5"/>
<path d="M408 14.6 Q411 16.4 414 14.6 M408 17.6 Q411 19.4 414 17.6" stroke="#5078b0" stroke-width="1.2" fill="none"/>
<path d="M417.4 19.4 L420 12.6 L422.6 19.4 M418.4 17.2 H421.6" stroke="#505868" stroke-width="1.1" fill="none"/>
<rect x="421.6" y="7.4" width="1.6" height="5" fill="#3a5a98"/>
</g>
<!-- design center -->
<g>
<rect x="430.4" y="4.6" width="15.2" height="14.8" fill="#d4dcea" stroke="#2a5ab0" stroke-width="1.2"/>
<rect x="431" y="5.2" width="3.6" height="13.6" fill="#f4f6fa"/>
<path d="M434.8 5 V19" stroke="#2a5ab0" stroke-width="0.8"/>
<g fill="#e8d020"><rect x="432.2" y="6" width="1.4" height="1.4"/><rect x="432.2" y="9" width="1.4" height="1.4"/><rect x="432.2" y="12" width="1.4" height="1.4"/><rect x="432.2" y="15" width="1.4" height="1.4"/></g>
<g stroke="#2a4a80" stroke-width="0.6"><rect x="437" y="6.4" width="2.2" height="2.2" fill="#e8e050"/><rect x="441" y="6.4" width="2.2" height="2.2" fill="#70d0c0"/><rect x="437" y="10.4" width="2.2" height="2.2" fill="#70d0c0"/><rect x="441" y="10.4" width="2.2" height="2.2" fill="#e8e050"/><rect x="439.4" y="14.4" width="3.2" height="3.2" fill="#f0e040"/></g>
</g>
<!-- tool palettes -->
<g>
<path d="M453.4 4.6 H461 L463.4 7 V19.4 H453.4 Z" fill="#d4dcea" stroke="#2a5ab0" stroke-width="1.2"/>
<rect x="454" y="5.2" width="2.6" height="13.6" fill="#f4f6fa"/>
<g stroke="#2a4a80" stroke-width="0.6"><rect x="457" y="6.6" width="2.2" height="2.2" fill="#70d0c0"/><rect x="457" y="10.6" width="2.2" height="2.2" fill="#e8e050"/><rect x="457" y="14.6" width="2.2" height="2.2" fill="#70d0c0"/></g>
<path d="M460 8 Q466.5 6.6 467.4 12.6" stroke="#1a4a90" stroke-width="1.4" fill="none"/>
<path d="M465 12 H469.8 L467.4 15 Z" fill="#1a4a90"/>
<rect x="465.8" y="15.8" width="3.2" height="3.2" fill="#f0e040" stroke="#2a4a80" stroke-width="0.6"/>
</g>
<!-- sheet set -->
<g>
<rect x="476" y="5" width="15.8" height="14.8" fill="#c3ccd6"/>
<path d="M476 19.8 L491.8 12.6 V19.8 Z" fill="#4f7fbc"/>
<path d="M484.5 5 H491.8 V10 Z" fill="#6c98cc"/>
<path d="M478.6 12.8 L486.4 15.4" stroke="#9aa4b0" stroke-width="4.2" stroke-linecap="round"/>
<path d="M478.6 12.8 L486.4 15.4" stroke="#e6e9ec" stroke-width="3.2" stroke-linecap="round"/>
<path d="M478.4 8.4 L488.6 11.4" stroke="#9aa4b0" stroke-width="4.4" stroke-linecap="round"/>
<path d="M478.4 8.4 L488.6 11.4" stroke="#f0f2f4" stroke-width="3.4" stroke-linecap="round"/>
<ellipse cx="489" cy="11.5" rx="1.1" ry="1.7" fill="#b4bcc8" stroke="#7e8896" stroke-width="0.5"/>
</g>
<!-- markup -->
<g>
<path d="M513 7.2 V17 H502 M514.8 8.6 V18.8 H503.6" stroke="#8e9296" stroke-width="1" fill="none"/>
<rect x="500.6" y="6.4" width="11" height="9.6" fill="#b4c8e6"/>
<g fill="#dfe8f6" stroke="#e81c24" stroke-width="2.6"><circle cx="501.6" cy="7.2" r="2.1"/><circle cx="507.6" cy="6.4" r="2.1"/><circle cx="509.8" cy="11.2" r="2.1"/><circle cx="505" cy="13.6" r="2.1"/><circle cx="500.8" cy="11.8" r="2"/></g>
<g fill="#dfe8f6"><circle cx="501.6" cy="7.2" r="2.1"/><circle cx="507.6" cy="6.4" r="2.1"/><circle cx="509.8" cy="11.2" r="2.1"/><circle cx="505" cy="13.6" r="2.1"/><circle cx="500.8" cy="11.8" r="2"/><circle cx="505" cy="9.8" r="3.4"/></g>
</g>
<!-- calculator -->
<g>
<rect x="524" y="4.4" width="12" height="15.4" rx="0.8" fill="#0a0a0a"/>
<rect x="525.8" y="5.6" width="8.6" height="2.6" fill="#6a9a5a"/>
<g fill="#e82020"><rect x="526" y="10.6" width="1.8" height="1.8"/><rect x="529.2" y="10.6" width="1.8" height="1.8"/><rect x="532.4" y="10.6" width="1.8" height="1.8"/></g>
<g fill="#fff"><rect x="526" y="13.6" width="1.8" height="1.8"/><rect x="529.2" y="13.6" width="1.8" height="1.8"/><rect x="532.4" y="13.6" width="1.8" height="1.8"/><rect x="526" y="16.6" width="1.8" height="1.8"/><rect x="529.2" y="16.6" width="1.8" height="1.8"/><rect x="532.4" y="16.6" width="1.8" height="1.8"/></g>
</g>
<!-- help -->
<g>
<rect x="552" y="5" width="14.8" height="13.8" rx="2.2" fill="url(#hb)"/>
<text x="559.4" y="16.6" font-family="Liberation Sans, sans-serif" font-weight="700" font-size="13.5" text-anchor="middle" fill="#fff">?</text>
</g>
<!-- toolbar end + grips -->
<g shape-rendering="crispEdges">
<line x1="574.5" y1="0" x2="574.5" y2="23" stroke="#fbfbfb"/><line x1="575.5" y1="0" x2="575.5" y2="23" stroke="#cfcfcf"/>
<line x1="578.5" y1="0" x2="578.5" y2="22" stroke="#fdfdfd"/><line x1="579.5" y1="0" x2="579.5" y2="22" stroke="#c4c4c4"/>
<line x1="582.5" y1="0" x2="582.5" y2="22" stroke="#fdfdfd"/><line x1="583.5" y1="0" x2="583.5" y2="22" stroke="#c4c4c4"/>
<line x1="961.5" y1="0" x2="961.5" y2="23" stroke="#fbfbfb"/><line x1="962.5" y1="0" x2="962.5" y2="23" stroke="#cfcfcf"/>
<line x1="965.5" y1="0" x2="965.5" y2="22" stroke="#fdfdfd"/><line x1="966.5" y1="0" x2="966.5" y2="22" stroke="#c4c4c4"/>
<line x1="969.5" y1="0" x2="969.5" y2="22" stroke="#fdfdfd"/><line x1="970.5" y1="0" x2="970.5" y2="22" stroke="#c4c4c4"/>
</g>
<!-- layers icon -->
<g stroke="#7088a8" stroke-width="0.5">
<path d="M592 14.6 L600 11.4 L607.6 15.4 L599.6 18.8 Z" fill="#a8c0e0"/>
<path d="M592 11.4 L600 8.2 L607.6 12.2 L599.6 15.6 Z" fill="#b8cce6"/>
<path d="M592 8.2 L600 5.2 L607.6 9 L599.6 12.4 Z" fill="#c8d8ee"/>
</g>
<!-- combobox -->
<rect x="612.8" y="1.5" width="298.4" height="20.2" rx="2.5" fill="#fff" stroke="#c4c8d0" stroke-width="1"/>
<!-- bulb -->
<g>
<path d="M623.3 4.8 Q627.8 4.8 627.6 9 Q627.4 11.4 625.4 13.4 V15 H621.2 V13.4 Q619.2 11.4 619 9 Q618.8 4.8 623.3 4.8 Z" fill="#fdf8c0" stroke="#c8b010" stroke-width="1"/>
<path d="M621.4 15.6 H625.2 M621.8 17 H624.8" stroke="#4a5a8a" stroke-width="1.1"/>
</g>
<!-- sun -->
<g>
<path d="M633.2 5 L636 6 L634.2 7.8 Z M645.6 5 L642.8 6 L644.6 7.8 Z M633.2 17.6 L636 16.6 L634.2 14.8 Z M645.6 17.6 L642.8 16.6 L644.6 14.8 Z" fill="#f0d020"/>
<circle cx="639.4" cy="11.3" r="5.9" fill="#f4dc50" stroke="#1a5ac0" stroke-width="1.1"/>
</g>
<!-- freeze vp -->
<g>
<circle cx="654.2" cy="9.3" r="4.9" fill="#8aa8d8" stroke="#6a88c0" stroke-width="0.8" stroke-dasharray="1.6 1"/>
<circle cx="654.2" cy="9.3" r="2.2" fill="#e8d870" stroke="#9ab0d8" stroke-width="0.6"/>
<rect x="657" y="10.4" width="5.8" height="6.4" fill="#f4f6fa" stroke="#5a80c0" stroke-width="0.9"/>
</g>
<!-- lock -->
<g>
<path d="M668.6 10.6 V8 Q668.6 5 671.6 5 Q674.6 5 674.6 8 V9.4" stroke="#b8b000" stroke-width="1.7" fill="none"/>
<path d="M668.6 10.6 V8 Q668.6 5 671.6 5 Q674.6 5 674.6 8 V9.4" stroke="#f0ec60" stroke-width="0.6" fill="none"/>
<path d="M672.4 9.8 L679.8 8.6 Q680.8 13 679.8 16.4 L673 17.8 Q671.6 13.6 672.4 9.8 Z" fill="#e0dc40" stroke="#a8a000" stroke-width="0.9"/>
<path d="M673.6 12 L679.4 11 M673.6 14.4 L679.4 13.4" stroke="#f8f8b0" stroke-width="0.7"/>
</g>
<!-- colour square -->
<rect x="683.6" y="8" width="8.6" height="8.2" fill="#fff" stroke="#000" stroke-width="1.2"/>
<!-- combobox arrow -->
<path d="M899.6 11.2 H907.4 L903.5 15.2 Z" fill="#000"/>
<!-- layer state icons -->
<g stroke="#7088a8" stroke-width="0.5">
<path d="M915.6 11.6 L923.6 8.4 L931 12.4 L923 15.8 Z" fill="#e8d030" stroke="#b8a010"/>
<path d="M915.6 9 L923.6 5.8 L931 9.8 L923 13.2 Z" fill="#b8cce6"/>
<path d="M915.6 6.4 L923.6 3.6 L931 7.2 L923 10.6 Z" fill="#c8d8ee"/>
</g>
<path d="M915.2 19.4 L919 15.6 M916.6 15.4 H919.2 V18" stroke="#1a3a80" stroke-width="1.1" fill="none"/>
<g stroke="#7088a8" stroke-width="0.5">
<path d="M938 15 L946 11.8 L953.6 15.8 L945.6 19.2 Z" fill="#a8c0e0"/>
<path d="M938 12.2 L946 9 L953.6 13 L945.6 16.4 Z" fill="#b8cce6"/>
<path d="M938 9.4 L946 6.4 L953.6 10.2 L945.6 13.6 Z" fill="#c8d8ee"/>
</g>
<path d="M952 10.4 Q951 4.4 945.4 5.8 L945.8 4 L941.6 7.2 L946 9.6 L945.6 7.8 Q949.4 7 950 10.8 Z" fill="#1a4a98"/>
<!-- text style -->
<text x="986" y="17.6" font-family="Liberation Sans, sans-serif" font-size="17" text-anchor="middle" fill="#111">A</text>
<path d="M990 13.6 L994 10 L995 11 L991.2 14.8 Z" fill="#c08050" stroke="#8a5428" stroke-width="0.4"/>
<path d="M986.8 17.8 Q988.4 14.8 990 13.6 L991.2 14.8 Q990 16.8 986.8 17.8 Z" fill="#222"/>
<rect x="999.5" y="1.5" width="70" height="20.2" rx="2.5" fill="#fff" stroke="#c4c8d0" stroke-width="1"/>
</svg>

<div class="lay">轴线</div>
<div class="std">Standard</div>
<div class="cap" style="left:204.2px;top:319.2px;letter-spacing:.2px;">离心模型试验装置</div>
<div class="cap" style="left:95.5px;top:671px;">模型在</div><div class="cap ltn" style="left:159.5px;top:669.8px;">X</div><div class="cap ltn" style="left:171.4px;top:669.8px;">O</div><div class="cap ltn" style="left:182.4px;top:669.8px;">Y</div><div class="cap" style="left:202.2px;top:671px;">平面布置图</div><div class="cap" style="left:283px;top:671px;">（</div><div class="cap" style="left:302.7px;top:671px;">单位</div><div class="cap" style="left:335.5px;top:671px;">：</div><div class="cap ltm" style="left:359.1px;top:671.2px;">m</div><div class="cap" style="left:368px;top:671px;">）</div>
<div class="cap" style="left:440.2px;top:671px;letter-spacing:.05px;">开挖面推进示意图</div><div class="cap" style="left:571.2px;top:671px;">（</div><div class="cap" style="left:591.6px;top:671px;">单位</div><div class="cap" style="left:625.4px;top:671px;">：</div><div class="cap ltm" style="left:648.2px;top:671.2px;">m</div><div class="cap" style="left:657.4px;top:671px;">）</div>
<div class="cap" style="left:711.5px;top:227.6px;letter-spacing:.14px;">开挖面推进引起单桩水平位移沿桩身分布</div>
<div class="cap" style="left:740.4px;top:421.4px;letter-spacing:.15px;">开挖面推进引起单桩弯矩沿桩身分布</div>
<div class="cap" style="left:764.9px;top:625.4px;letter-spacing:.17px;">开挖面推进引起单桩轴力分布</div>
<div id="sb"><i style="left:0;width:25px;background:#dcdcdc"></i><i style="left:25px;width:37px;background:#fff"></i><i style="left:24px;width:1px;background:#555"></i><i style="left:62px;width:1px;background:#333"></i><i style="left:117px;width:1px;background:#333"></i><i style="left:170px;width:1px;background:#333"></i><i style="left:5px;top:2px;width:1px;background:#222"></i><i style="left:9px;top:2px;width:1px;background:#222"></i><i style="left:14px;top:2px;width:1px;background:#222"></i><i style="left:19px;top:2px;width:1px;background:#222"></i><span style="left:32px;">模型</span><span style="left:67px;">Layout1</span><span style="left:122px;">Layout2</span></div>
</body>
</html>
